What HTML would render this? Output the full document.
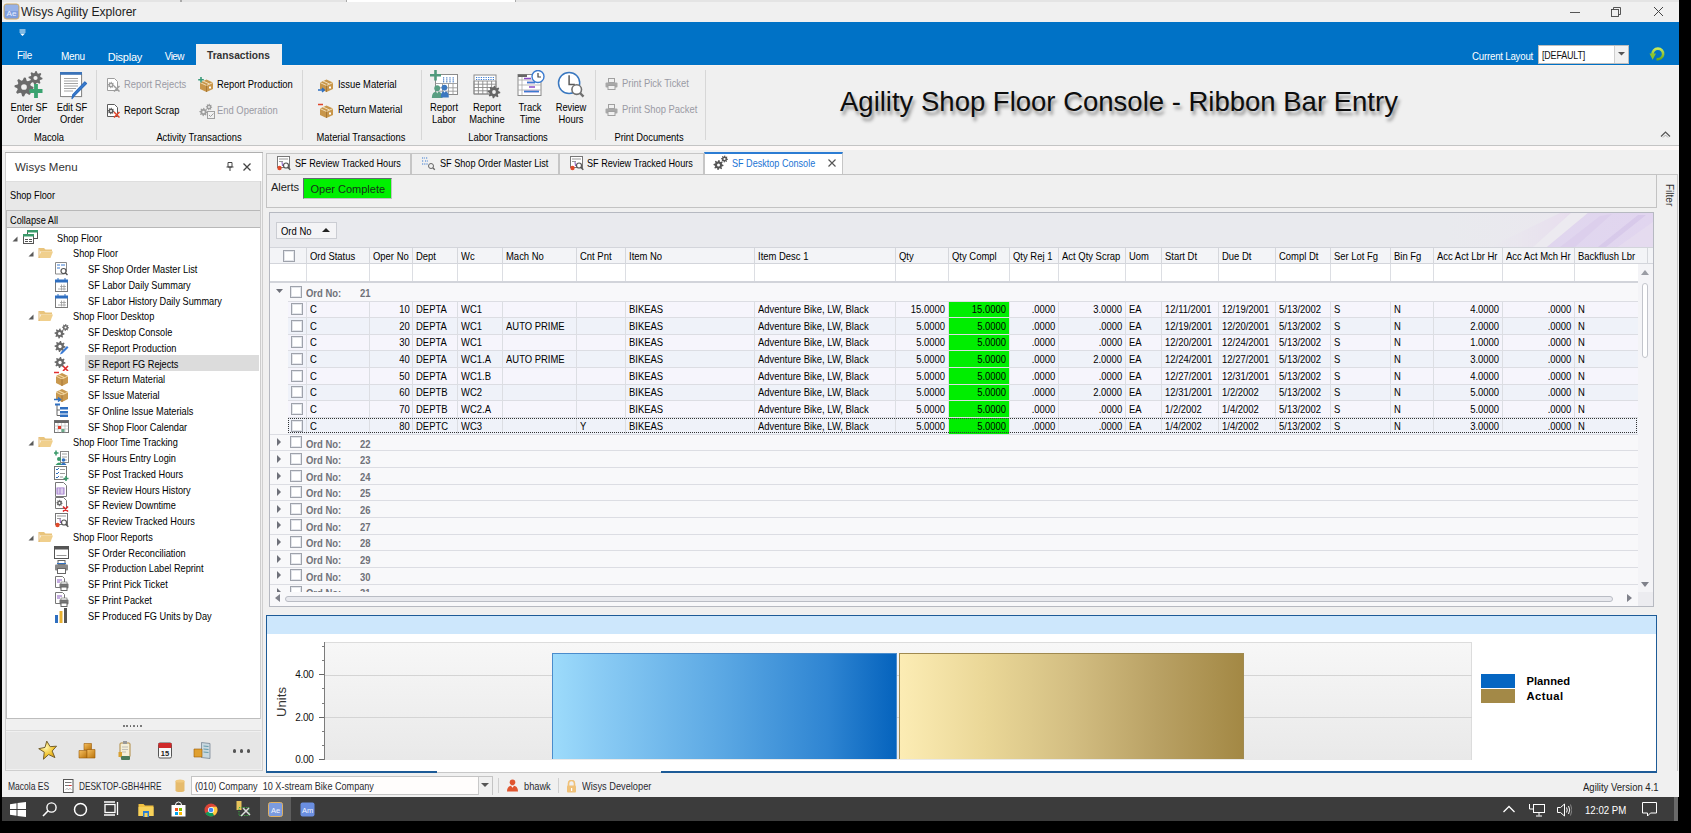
<!DOCTYPE html><html><head><meta charset="utf-8"><style>
*{margin:0;padding:0;box-sizing:border-box}
html,body{width:1691px;height:833px;overflow:hidden;background:#000}
body{position:relative;font-family:"Liberation Sans",sans-serif;color:#1e1e1e}
.a{position:absolute}
.t{font-size:10px;letter-spacing:-0.2px;white-space:nowrap;line-height:12px}

.gt{font-size:10.5px;letter-spacing:0;white-space:nowrap;line-height:12px;color:#000;transform:scaleX(.9);transform-origin:0 0}
.gr{transform-origin:100% 0}
.gb{font-size:10.5px;font-weight:bold;letter-spacing:0;white-space:nowrap;line-height:12px;color:#6f7178;transform:scaleX(.9);transform-origin:0 0}
.cb{position:absolute;width:12px;height:12px;border:1px solid #9ea2ab;background:#fff;box-shadow:inset 0 0 0 1px #e3e5ea}

.tt{font-size:10.4px;letter-spacing:0;white-space:nowrap;line-height:12px;color:#000;transform:scaleX(.885);transform-origin:0 0}

.rt{font-size:10.4px;white-space:nowrap;line-height:12px;color:#000;transform:scaleX(.905);transform-origin:0 0}
.rd{font-size:10.4px;white-space:nowrap;line-height:12px;color:#9a9aa4;transform:scaleX(.905);transform-origin:0 0}
.rc{font-size:10.4px;white-space:nowrap;line-height:12px;color:#000;text-align:center;transform:scaleX(.9);transform-origin:50% 0}

.st{font-size:10.4px;white-space:nowrap;line-height:12px;color:#000;transform:scaleX(.89);transform-origin:0 0}
</style></head><body><div class="a" style="left:0px;top:0px;width:1691px;height:833px;background:#000"></div>
<div class="a" style="left:2px;top:0px;width:1677px;height:797px;background:#f0f0f0"></div>
<div class="a" style="left:2px;top:0px;width:1677px;height:22px;background:#f0f0f0"></div>
<div class="a" style="left:2px;top:0px;width:1677px;height:2px;background:#e4e4e4"></div>
<div class="a" style="left:180px;top:0px;width:1.5px;height:2px;background:#aaa"></div>
<div class="a" style="left:347px;top:0px;width:168px;height:2px;background:#fff"></div>
<div class="a" style="left:346px;top:0px;width:1.2px;height:2px;background:#aaa"></div>
<div class="a" style="left:515px;top:0px;width:1.2px;height:2px;background:#aaa"></div>
<svg class="a" style="left:3px;top:3px" width="17" height="17" viewBox="0 0 17 17"><rect x="1" y="1" width="15" height="15" rx="2.5" fill="#7e9ede" stroke="#d8b066" stroke-width="1"/><rect x="2" y="2" width="13" height="6" fill="#a9c0ec" opacity=".6"/><text x="8.5" y="12.5" font-size="8" text-anchor="middle" font-family="Liberation Sans" fill="#e8eeff">Ae</text></svg>
<div class="a t" style="left:21px;top:4.5px;font-size:12.2px;letter-spacing:-0.05px;line-height:14px;color:#1e1e1e">Wisys Agility Explorer</div>
<div class="a" style="left:1570px;top:12px;width:9.5px;height:1px;background:#555"></div>
<svg class="a" style="left:1611px;top:7px" width="10" height="10" viewBox="0 0 10 10"><rect x="0.5" y="2.5" width="7" height="7" fill="none" stroke="#444" stroke-width=".9"/><path d="M2.5 2.5v-2h7v7h-2" fill="none" stroke="#444" stroke-width=".9"/></svg>
<svg class="a" style="left:1653px;top:6px" width="11" height="11" viewBox="0 0 11 11"><path d="M1 1l9 9M10 1l-9 9" stroke="#444" stroke-width="1"/></svg>
<div class="a" style="left:2px;top:22px;width:1677px;height:43px;background:#0072c6"></div>
<svg class="a" style="left:19px;top:29px" width="7" height="7" viewBox="0 0 7 7"><path d="M0.5 1h6M0.5 3h6" stroke="#fff" stroke-width="1"/><path d="M1 4.5h5l-2.5 2.5z" fill="#fff"/></svg>
<div class="a t" style="left:17px;top:49.80px;color:#fff;font-size:10px;letter-spacing:-0.3px">File</div>
<div class="a t" style="left:61px;top:50.90px;color:#fff;font-size:10px;letter-spacing:-0.3px">Menu</div>
<div class="a t" style="left:107.7px;top:51.20px;color:#fff;font-size:11px;letter-spacing:-0.25px">Display</div>
<div class="a t" style="left:164.8px;top:50.90px;color:#fff;font-size:10px;letter-spacing:-0.6px">View</div>
<div class="a" style="left:196px;top:44px;width:86px;height:21px;background:#f0f0f0"></div>
<div class="a t" style="left:207px;top:49.50px;font-weight:bold;font-size:10.2px;letter-spacing:0;color:#333">Transactions</div>
<div class="a t" style="left:1472px;top:50.60px;color:#fff;font-size:10.4px;transform:scaleX(.926);transform-origin:0 0">Current Layout</div>
<div class="a" style="left:1538px;top:45px;width:91px;height:19px;background:#fff;border:1px solid #bdbdbd"></div>
<div class="a t" style="left:1542px;top:50.10px;font-size:10.4px;color:#111;transform:scaleX(.86);transform-origin:0 0">[DEFAULT]</div>
<div class="a" style="left:1614px;top:46px;width:14px;height:17px;background:#f1f1f1;border-left:1px solid #cfcfcf"></div>
<svg class="a" style="left:1618px;top:52px" width="7" height="4" viewBox="0 0 7 4"><path d="M0 0h7l-3.5 3.5z" fill="#555"/></svg>
<svg class="a" style="left:1648px;top:46px" width="18" height="16" viewBox="0 0 18 16"><defs><linearGradient id="rg" x1="0" y1="0" x2="0" y2="1"><stop offset="0" stop-color="#c8e85a"/><stop offset="1" stop-color="#6aa81a"/></linearGradient></defs><path d="M4.6 8.5 A5.3 5.3 0 1 1 8.5 13" fill="none" stroke="url(#rg)" stroke-width="2.6"/><path d="M1.5 7.5 L8 7.5 L4.6 13.8 Z" fill="#8cc42a"/></svg>
<div class="a" style="left:2px;top:65px;width:1677px;height:80px;background:#f0f0f0"></div>
<div class="a" style="left:2px;top:65px;width:194px;height:1px;background:#fbf3ee"></div>
<div class="a" style="left:282px;top:65px;width:1397px;height:1px;background:#fbf3ee"></div>
<div class="a" style="left:2px;top:145px;width:1677px;height:1px;background:#c4c4c4"></div>
<div class="a" style="left:2px;top:146px;width:1677px;height:6px;background:#f0f0f0"></div>
<div class="a" style="left:2px;top:146px;width:1677px;height:4px;background:#fcf8f7"></div>
<div class="a" style="left:96px;top:70px;width:1px;height:70px;background:#d7d7d7"></div>
<div class="a" style="left:302px;top:70px;width:1px;height:70px;background:#d7d7d7"></div>
<div class="a" style="left:421px;top:70px;width:1px;height:70px;background:#d7d7d7"></div>
<div class="a" style="left:595px;top:70px;width:1px;height:70px;background:#d7d7d7"></div>
<div class="a" style="left:705px;top:70px;width:1px;height:70px;background:#d7d7d7"></div>
<div class="a rc" style="left:-11px;width:120px;top:132.00px">Macola</div>
<div class="a rc" style="left:139px;width:120px;top:132.00px">Activity Transactions</div>
<div class="a rc" style="left:300.5px;width:120px;top:132.00px">Material Transactions</div>
<div class="a rc" style="left:447.5px;width:120px;top:132.00px">Labor Transactions</div>
<div class="a rc" style="left:589.3px;width:120px;top:132.00px">Print Documents</div>
<svg class="a" style="left:13px;top:70px" width="33" height="28" viewBox="0 0 33 28"><polygon points="20.50,17.00 20.32,18.85 17.32,19.62 16.69,20.80 17.72,23.72 16.28,24.90 13.62,23.32 12.33,23.71 11.00,26.50 9.15,26.32 8.38,23.32 7.20,22.69 4.28,23.72 3.10,22.28 4.68,19.62 4.29,18.33 1.50,17.00 1.68,15.15 4.68,14.38 5.31,13.20 4.28,10.28 5.72,9.10 8.38,10.68 9.67,10.29 11.00,7.50 12.85,7.68 13.62,10.68 14.80,11.31 17.72,10.28 18.90,11.72 17.32,14.38 17.71,15.67" fill="#6b6b6b"/><circle cx="11" cy="17" r="2.85" fill="#f0f0f0"/><polygon points="29.50,8.00 29.37,9.37 27.16,9.93 26.69,10.80 27.45,12.95 26.39,13.82 24.43,12.66 23.48,12.94 22.50,15.00 21.13,14.87 20.57,12.66 19.70,12.19 17.55,12.95 16.68,11.89 17.84,9.93 17.56,8.98 15.50,8.00 15.63,6.63 17.84,6.07 18.31,5.20 17.55,3.05 18.61,2.18 20.57,3.34 21.52,3.06 22.50,1.00 23.87,1.13 24.43,3.34 25.30,3.81 27.45,3.05 28.32,4.11 27.16,6.07 27.44,7.02" fill="#6b6b6b"/><circle cx="22.5" cy="8" r="2.10" fill="#f0f0f0"/><path d="M23 14v14M16.5 21h13" stroke="#3aa370" stroke-width="3.8"/></svg>
<div class="a rc" style="left:-11px;width:80px;top:102.40px">Enter SF</div>
<div class="a rc" style="left:-11px;width:80px;top:114.00px">Order</div>
<div class="a rc" style="left:32px;width:80px;top:102.40px">Edit SF</div>
<div class="a rc" style="left:32px;width:80px;top:114.00px">Order</div>
<div class="a rc" style="left:404px;width:80px;top:102.40px">Report</div>
<div class="a rc" style="left:404px;width:80px;top:114.00px">Labor</div>
<div class="a rc" style="left:447px;width:80px;top:102.40px">Report</div>
<div class="a rc" style="left:447px;width:80px;top:114.00px">Machine</div>
<div class="a rc" style="left:490px;width:80px;top:102.40px">Track</div>
<div class="a rc" style="left:490px;width:80px;top:114.00px">Time</div>
<div class="a rc" style="left:530.5px;width:80px;top:102.40px">Review</div>
<div class="a rc" style="left:530.5px;width:80px;top:114.00px">Hours</div>
<svg class="a" style="left:59px;top:71px" width="30" height="29" viewBox="0 0 30 29"><rect x="2.5" y="2.5" width="21" height="24" rx="1" fill="#d8d8d8"/><rect x="1.5" y="1.5" width="21" height="24" fill="#fff" stroke="#8a8a8a"/><rect x="1" y="1" width="22" height="2.8" fill="#3b73b9"/><path d="M5 7.5h14M5 10h14M5 12.5h14M5 15h14M5 17.5h12M5 20h9" stroke="#9a9a9a" stroke-width=".9"/><path d="M27.5 12.5 L15.5 24.5 L13 27.5 L13.8 23.6 L25.8 11 Z" fill="#3f7fd0" stroke="#2f6fc0" stroke-width="1.2" stroke-linejoin="round"/></svg>
<svg class="a" style="left:106px;top:78px" width="14" height="14" viewBox="0 0 14 14"><path d="M1.5 0.5h7l3 3v9h-10z" fill="#fff" stroke="#9d9d9d"/><polygon points="8.30,7.00 8.24,7.64 7.20,7.91 6.98,8.32 7.33,9.33 6.83,9.74 5.91,9.20 5.46,9.33 5.00,10.30 4.36,10.24 4.09,9.20 3.68,8.98 2.67,9.33 2.26,8.83 2.80,7.91 2.67,7.46 1.70,7.00 1.76,6.36 2.80,6.09 3.02,5.68 2.67,4.67 3.17,4.26 4.09,4.80 4.54,4.67 5.00,3.70 5.64,3.76 5.91,4.80 6.32,5.02 7.33,4.67 7.74,5.17 7.20,6.09 7.33,6.54" fill="#9d9d9d"/><circle cx="5" cy="7" r="0.99" fill="#fff"/><path d="M8 8l5.5 5.5M13.5 8l-5.5 5.5" stroke="#9d9d9d" stroke-width="1.5"/></svg>
<div class="a rd" style="left:123.8px;top:78.60px;">Report Rejects</div>
<svg class="a" style="left:106px;top:104px" width="14" height="14" viewBox="0 0 14 14"><path d="M1.5 0.5h7l3 3v9h-10z" fill="#fff" stroke="#5b5b5b"/><polygon points="8.30,7.00 8.24,7.64 7.20,7.91 6.98,8.32 7.33,9.33 6.83,9.74 5.91,9.20 5.46,9.33 5.00,10.30 4.36,10.24 4.09,9.20 3.68,8.98 2.67,9.33 2.26,8.83 2.80,7.91 2.67,7.46 1.70,7.00 1.76,6.36 2.80,6.09 3.02,5.68 2.67,4.67 3.17,4.26 4.09,4.80 4.54,4.67 5.00,3.70 5.64,3.76 5.91,4.80 6.32,5.02 7.33,4.67 7.74,5.17 7.20,6.09 7.33,6.54" fill="#5b5b5b"/><circle cx="5" cy="7" r="0.99" fill="#fff"/><path d="M8 8l5.5 5.5M13.5 8l-5.5 5.5" stroke="#e0452a" stroke-width="1.5"/></svg>
<div class="a rt" style="left:123.8px;top:104.60px;">Report Scrap</div>
<svg class="a" style="left:198px;top:77px" width="17" height="16" viewBox="0 0 17 16"><path d="M2 5.5 l6.5-3 6.5 3 v6.5 l-6.5 3 -6.5-3z" fill="#c8964a"/><path d="M2 5.5 l6.5 3 6.5-3" fill="none" stroke="#f3e2bf" stroke-width=".9"/><path d="M8.5 8.5v6.5" stroke="#9e6e30" stroke-width=".8"/><path d="M5 4 l6.5 3" stroke="#f3e2bf" stroke-width="1"/><rect x="11" y="9.5" width="2" height="2" fill="#fff"/><path d="M3 0v5.5M0.2 2.7h5.6" stroke="#3a9a7a" stroke-width="1.6"/></svg>
<div class="a rt" style="left:216.5px;top:78.60px;">Report Production</div>
<svg class="a" style="left:199px;top:103px" width="16" height="16" viewBox="0 0 16 16"><polygon points="8.70,9.00 8.62,9.82 7.29,10.16 7.01,10.68 7.47,11.97 6.83,12.49 5.66,11.79 5.09,11.97 4.50,13.20 3.68,13.12 3.34,11.79 2.82,11.51 1.53,11.97 1.01,11.33 1.71,10.16 1.53,9.59 0.30,9.00 0.38,8.18 1.71,7.84 1.99,7.32 1.53,6.03 2.17,5.51 3.34,6.21 3.91,6.03 4.50,4.80 5.32,4.88 5.66,6.21 6.18,6.49 7.47,6.03 7.99,6.67 7.29,7.84 7.47,8.41" fill="#9d9d9d"/><circle cx="4.5" cy="9" r="1.26" fill="#f0f0f0"/><polygon points="13.20,4.00 13.14,4.62 12.13,4.88 11.92,5.28 12.26,6.26 11.78,6.66 10.88,6.13 10.45,6.26 10.00,7.20 9.38,7.14 9.12,6.13 8.72,5.92 7.74,6.26 7.34,5.78 7.87,4.88 7.74,4.45 6.80,4.00 6.86,3.38 7.87,3.12 8.08,2.72 7.74,1.74 8.22,1.34 9.12,1.87 9.55,1.74 10.00,0.80 10.62,0.86 10.88,1.87 11.28,2.08 12.26,1.74 12.66,2.22 12.13,3.12 12.26,3.55" fill="#9d9d9d"/><circle cx="10" cy="4" r="0.96" fill="#f0f0f0"/><rect x="8.5" y="8.5" width="7" height="7" fill="#f0f0f0" stroke="#a0a0a0"/><path d="M10 12l1.5 1.5 3-3" stroke="#a0a0a0" fill="none"/></svg>
<div class="a rd" style="left:216.5px;top:104.60px;">End Operation</div>
<svg class="a" style="left:318px;top:77px" width="17" height="16" viewBox="0 0 17 16"><path d="M2 5.5 l6.5-3 6.5 3 v6.5 l-6.5 3 -6.5-3z" fill="#c8964a"/><path d="M2 5.5 l6.5 3 6.5-3" fill="none" stroke="#f3e2bf" stroke-width=".9"/><path d="M8.5 8.5v6.5" stroke="#9e6e30" stroke-width=".8"/><path d="M5 4 l6.5 3" stroke="#f3e2bf" stroke-width="1"/><rect x="11" y="9.5" width="2" height="2" fill="#fff"/><path d="M0 13h6M4 11l2.3 2-2.3 2" stroke="#2f6fc0" stroke-width="1.5" fill="none"/></svg>
<div class="a rt" style="left:338.2px;top:78.60px;">Issue Material</div>
<svg class="a" style="left:318px;top:103px" width="17" height="16" viewBox="0 0 17 16"><path d="M2 5.5 l6.5-3 6.5 3 v6.5 l-6.5 3 -6.5-3z" fill="#c8964a"/><path d="M2 5.5 l6.5 3 6.5-3" fill="none" stroke="#f3e2bf" stroke-width=".9"/><path d="M8.5 8.5v6.5" stroke="#9e6e30" stroke-width=".8"/><path d="M5 4 l6.5 3" stroke="#f3e2bf" stroke-width="1"/><rect x="11" y="9.5" width="2" height="2" fill="#fff"/><path d="M0 1.5h5" stroke="#e0452a" stroke-width="1.5"/></svg>
<div class="a rt" style="left:338.2px;top:104.40px;">Return Material</div>
<svg class="a" style="left:429px;top:70px" width="30" height="28" viewBox="0 0 30 28"><rect x="6.5" y="4.5" width="22" height="20" fill="#fff" stroke="#8a8a8a"/><path d="M6.5 13.5h22M6.5 17.8h22M6.5 21.2h22M13.5 13.5v11M19.5 13.5v11M24 13.5v11" stroke="#9a9a9a" stroke-width=".9"/><rect x="14.0" y="7.3" width="1.2" height="1.2" fill="#3b73c0"/><rect x="14.0" y="9.3" width="1.2" height="1.2" fill="#3b73c0"/><rect x="14.0" y="11.2" width="1.2" height="1.2" fill="#3b73c0"/><rect x="17.2" y="7.3" width="1.2" height="1.2" fill="#3b73c0"/><rect x="17.2" y="9.3" width="1.2" height="1.2" fill="#3b73c0"/><rect x="17.2" y="11.2" width="1.2" height="1.2" fill="#3b73c0"/><rect x="20.4" y="7.3" width="1.2" height="1.2" fill="#3b73c0"/><rect x="20.4" y="9.3" width="1.2" height="1.2" fill="#3b73c0"/><rect x="20.4" y="11.2" width="1.2" height="1.2" fill="#3b73c0"/><rect x="23.6" y="7.3" width="1.2" height="1.2" fill="#3b73c0"/><rect x="23.6" y="9.3" width="1.2" height="1.2" fill="#3b73c0"/><rect x="23.6" y="11.2" width="1.2" height="1.2" fill="#3b73c0"/><path d="M1 5.3h11M6.5 0v10.5" stroke="#4f9a7c" stroke-width="2.6"/><circle cx="8.2" cy="18.2" r="2.9" fill="#5a9e82"/><path d="M2.8 28 Q2.8 21.6 8.2 21.6 Q13.6 21.6 13.6 28 Z" fill="#5a9e82"/><path d="M7.2 21.6h2l-1 1.8z" fill="#fff"/><circle cx="15.4" cy="17.6" r="2.9" fill="#3c78c0"/><path d="M11.8 27.5 Q11.8 21 15.6 21 Q19.8 21 19.8 27.5 Z" fill="#3c78c0"/><path d="M14.6 21h2l-1 1.8z" fill="#fff"/></svg>
<svg class="a" style="left:473px;top:74px" width="29" height="25" viewBox="0 0 29 25"><rect x="1" y="1" width="22" height="19" fill="#fff"/><path d="M1 7.0h22" stroke="#8a8a8a" stroke-width=".9"/><path d="M1 10.2h22" stroke="#8a8a8a" stroke-width=".9"/><path d="M1 13.5h22" stroke="#8a8a8a" stroke-width=".9"/><path d="M1 16.8h22" stroke="#8a8a8a" stroke-width=".9"/><path d="M1 20.0h22" stroke="#8a8a8a" stroke-width=".9"/><path d="M1.0 7v13" stroke="#8a8a8a" stroke-width=".9"/><path d="M5.4 7v13" stroke="#8a8a8a" stroke-width=".9"/><path d="M9.8 7v13" stroke="#8a8a8a" stroke-width=".9"/><path d="M14.2 7v13" stroke="#8a8a8a" stroke-width=".9"/><path d="M18.6 7v13" stroke="#8a8a8a" stroke-width=".9"/><path d="M23.0 7v13" stroke="#8a8a8a" stroke-width=".9"/><rect x="1" y="1" width="22" height="19" fill="none" stroke="#8a8a8a"/><path d="M3 3.5h18M3 5.5h18" stroke="#3b7bd0" stroke-dasharray="1.2 1.2"/><polygon points="27.30,18.00 27.18,19.23 25.19,19.74 24.77,20.52 25.45,22.45 24.50,23.24 22.74,22.19 21.88,22.45 21.00,24.30 19.77,24.18 19.26,22.19 18.48,21.77 16.55,22.45 15.76,21.50 16.81,19.74 16.55,18.88 14.70,18.00 14.82,16.77 16.81,16.26 17.23,15.48 16.55,13.55 17.50,12.76 19.26,13.81 20.12,13.55 21.00,11.70 22.23,11.82 22.74,13.81 23.52,14.23 25.45,13.55 26.24,14.50 25.19,16.26 25.45,17.12" fill="#666"/><circle cx="21" cy="18" r="1.89" fill="#f0f0f0"/></svg>
<svg class="a" style="left:517px;top:70px" width="28" height="27" viewBox="0 0 28 27"><rect x="1" y="4.5" width="23" height="21" fill="#fff" stroke="#8a8a8a"/><rect x="1" y="4.5" width="9" height="2.5" fill="#666"/><path d="M1 10h23M1 15h23M1 20h23M5 7v18" stroke="#aaa" stroke-width=".8"/><path d="M7 8.5h7M10 12.5h8M12 17h6M7 21.5h15" stroke="#8a4ac8" stroke-width="1.4"/><path d="M10 12.5h8M7 21.5h15" stroke="#3b7bd0" stroke-width="1.4"/><circle cx="21" cy="6.5" r="6" fill="#fff" stroke="#3b7bd0" stroke-width="1.4"/><path d="M21 3v4h3" stroke="#444" fill="none" stroke-width="1.2"/></svg>
<svg class="a" style="left:557px;top:71px" width="28" height="28" viewBox="0 0 28 28"><circle cx="12.1" cy="12" r="10.6" fill="#fff" stroke="#3a78c0" stroke-width="1.5"/><path d="M12.1 4.2v9.2h5.8" stroke="#5a5a5a" fill="none" stroke-width="1.5"/><circle cx="19.7" cy="18.6" r="4.8" fill="#fff" stroke="#707070" stroke-width="1.6"/><path d="M23 22l3.5 3.6" stroke="#707070" stroke-width="2.4"/></svg>
<svg class="a" style="left:605px;top:78px" width="13" height="12" viewBox="0 0 13 12"><rect x="3.5" y="0.5" width="6" height="4" fill="#f0f0f0" stroke="#a0a0a0"/><rect x="0.5" y="4.5" width="12" height="5" rx="1" fill="#a8a8a8"/><rect x="3" y="7.5" width="7" height="4" fill="#f0f0f0" stroke="#a0a0a0"/></svg>
<div class="a rd" style="left:622.4px;top:78.40px;">Print Pick Ticket</div>
<svg class="a" style="left:605px;top:104px" width="13" height="12" viewBox="0 0 13 12"><rect x="3.5" y="0.5" width="6" height="4" fill="#f0f0f0" stroke="#a0a0a0"/><rect x="0.5" y="4.5" width="12" height="5" rx="1" fill="#a8a8a8"/><rect x="3" y="7.5" width="7" height="4" fill="#f0f0f0" stroke="#a0a0a0"/></svg>
<div class="a rd" style="left:622.4px;top:104.40px;">Print Shop Packet</div>
<div class="a t" style="left:840px;top:86px;font-size:27.5px;letter-spacing:0;line-height:32px;color:#0d0d0d;text-shadow:2px 4px 3.5px rgba(0,0,0,.42)">Agility Shop Floor Console - Ribbon Bar Entry</div>
<svg class="a" style="left:1660px;top:130px" width="11" height="8" viewBox="0 0 11 8"><path d="M1 6.5 L5.5 2 L10 6.5" fill="none" stroke="#555" stroke-width="1.2"/><path d="M3 7.5 L5.5 5 L8 7.5" fill="none" stroke="#999" stroke-width=".8"/></svg>
<div class="a" style="left:263px;top:152px;width:1416px;height:619px;background:#f0f0f0"></div>
<div class="a" style="left:266px;top:152.5px;width:145px;height:21.5px;background:#f0f0f0;border:1px solid #c6c6c6;border-bottom:none"></div>
<svg class="a" style="left:276px;top:156px" width="15" height="15" viewBox="0 0 15 15"><rect x="1.5" y="0.5" width="12" height="11" fill="#fff" stroke="#777"/><path d="M3 3h9M3 5.5h4" stroke="#999"/><circle cx="3.5" cy="12" r="2.2" fill="#e04a2a"/><path d="M6 6l0.5 4" stroke="#8a5ac0"/><circle cx="10" cy="9.5" r="2.5" fill="#fff" stroke="#555" stroke-width="1.2"/><path d="M11.8 11.3l2.5 2.5" stroke="#555" stroke-width="1.5"/></svg>
<div class="a st" style="left:294.6px;top:158.00px;transform:scaleX(.877)">SF Review Tracked Hours</div>
<div class="a" style="left:411px;top:152.5px;width:147.5px;height:21.5px;background:#f0f0f0;border:1px solid #c6c6c6;border-bottom:none"></div>
<svg class="a" style="left:421px;top:156px" width="15" height="15" viewBox="0 0 15 15"><path d="M1 2h3M5 2h2M1 5h2M4 5h3M1 8h6" stroke="#3b7bd0" stroke-width="1" stroke-dasharray="1 .8"/><circle cx="10" cy="10" r="2.5" fill="none" stroke="#666"/><path d="M11.8 11.8l2 2" stroke="#666" stroke-width="1.3"/></svg>
<div class="a st" style="left:439.5px;top:158.00px;transform:scaleX(.877)">SF Shop Order Master List</div>
<div class="a" style="left:558.5px;top:152.5px;width:145.0px;height:21.5px;background:#f0f0f0;border:1px solid #c6c6c6;border-bottom:none"></div>
<svg class="a" style="left:568.5px;top:156px" width="15" height="15" viewBox="0 0 15 15"><rect x="1.5" y="0.5" width="12" height="11" fill="#fff" stroke="#777"/><path d="M3 3h9M3 5.5h4" stroke="#999"/><circle cx="3.5" cy="12" r="2.2" fill="#e04a2a"/><path d="M6 6l0.5 4" stroke="#8a5ac0"/><circle cx="10" cy="9.5" r="2.5" fill="#fff" stroke="#555" stroke-width="1.2"/><path d="M11.8 11.3l2.5 2.5" stroke="#555" stroke-width="1.5"/></svg>
<div class="a st" style="left:587.3px;top:158.00px;transform:scaleX(.877)">SF Review Tracked Hours</div>
<div class="a" style="left:703.5px;top:152px;width:139px;height:22.5px;background:#fff;border:1px solid #c6c6c6;border-bottom:none;border-top:2px solid #2b7cd3"></div>
<svg class="a" style="left:713px;top:155px" width="16" height="16" viewBox="0 0 16 16"><polygon points="10.50,10.00 10.40,10.98 8.83,11.38 8.49,12.00 9.04,13.54 8.28,14.16 6.88,13.33 6.20,13.53 5.50,15.00 4.52,14.90 4.12,13.33 3.50,12.99 1.96,13.54 1.34,12.78 2.17,11.38 1.97,10.70 0.50,10.00 0.60,9.02 2.17,8.62 2.51,8.00 1.96,6.46 2.72,5.84 4.12,6.67 4.80,6.47 5.50,5.00 6.48,5.10 6.88,6.67 7.50,7.01 9.04,6.46 9.66,7.22 8.83,8.62 9.03,9.30" fill="#555"/><circle cx="5.5" cy="10" r="1.50" fill="#fff"/><polygon points="15.00,4.00 14.93,4.68 13.83,4.96 13.60,5.40 13.97,6.47 13.44,6.91 12.46,6.33 11.99,6.47 11.50,7.50 10.82,7.43 10.54,6.33 10.10,6.10 9.03,6.47 8.59,5.94 9.17,4.96 9.03,4.49 8.00,4.00 8.07,3.32 9.17,3.04 9.40,2.60 9.03,1.53 9.56,1.09 10.54,1.67 11.01,1.53 11.50,0.50 12.18,0.57 12.46,1.67 12.90,1.90 13.97,1.53 14.41,2.06 13.83,3.04 13.97,3.51" fill="#555"/><circle cx="11.5" cy="4" r="1.05" fill="#fff"/></svg>
<div class="a st" style="left:732px;top:158.00px;color:#1a73d4;transform:scaleX(.873)">SF Desktop Console</div>
<svg class="a" style="left:827.5px;top:159px" width="8" height="8" viewBox="0 0 8 8"><path d="M0.5 0.5l7 7M7.5 0.5l-7 7" stroke="#555" stroke-width="1.15"/></svg>
<div class="a" style="left:266px;top:173.5px;width:1391px;height:34px;background:#f0f0f0;border:1px solid #c3c3c3"></div>
<div class="a st" style="left:271px;top:181.00px;font-size:11.2px;letter-spacing:-0.1px;color:#222;transform:none">Alerts</div>
<div class="a" style="left:303px;top:178px;width:89px;height:21px;background:#00f000;border:1px solid #5f6a70;border-right-color:#c0c0c0;border-bottom-color:#c0c0c0"></div>
<div class="a st" style="left:310.5px;top:183.00px;font-size:11px;letter-spacing:0;color:#17301c;transform:none">Oper Complete</div>
<div class="a" style="left:1656.5px;top:173.5px;width:21px;height:597px;background:#f0f0f0;border-right:1px solid #c6c6c6"></div>
<div class="a" style="left:1656.5px;top:173.5px;width:21px;height:1px;background:#c6c6c6"></div>
<div class="a st" style="left:1658px;top:189px;transform:rotate(90deg);transform-origin:center;width:22px;text-align:center;font-size:10px;color:#333">Filter</div>
<div class="a" style="left:266px;top:615px;width:1391px;height:157px;background:#fff;border:1px solid #1d5b97"></div>
<div class="a" style="left:267px;top:616px;width:1389px;height:18px;background:#cde7fc"></div>
<div class="a" style="left:437px;top:770.5px;width:224px;height:1.5px;background:#fff"></div>
<div class="a" style="left:324px;top:642px;width:1148px;height:117.5px;background:linear-gradient(180deg,#f7f7f7,#e9e9e9);border:1px solid #dcdcdc;border-left:none;border-bottom:none"></div>
<div class="a" style="left:324.5px;top:674.5px;width:1147px;height:1px;background:#d4d4d4"></div>
<div class="a" style="left:324.5px;top:717px;width:1147px;height:1px;background:#d4d4d4"></div>
<div class="a" style="left:323.5px;top:642px;width:1.5px;height:118px;background:#7c7c7c"></div>
<div class="a" style="left:321.5px;top:646.0px;width:2.5px;height:1px;background:#7c7c7c"></div>
<div class="a" style="left:321.5px;top:660.0px;width:2.5px;height:1px;background:#7c7c7c"></div>
<div class="a" style="left:321.5px;top:688.0px;width:2.5px;height:1px;background:#7c7c7c"></div>
<div class="a" style="left:321.5px;top:702.7px;width:2.5px;height:1px;background:#7c7c7c"></div>
<div class="a" style="left:321.5px;top:731.0px;width:2.5px;height:1px;background:#7c7c7c"></div>
<div class="a" style="left:321.5px;top:745.0px;width:2.5px;height:1px;background:#7c7c7c"></div>
<div class="a" style="left:319px;top:673.9px;width:5px;height:1.2px;background:#666"></div>
<div class="a" style="left:319px;top:716.6px;width:5px;height:1.2px;background:#666"></div>
<div class="a" style="left:319px;top:758.6px;width:5px;height:1.2px;background:#666"></div>
<div class="a st" style="left:295.3px;top:669.1px;font-size:10px;letter-spacing:-0.35px;color:#111;transform:none">4.00</div>
<div class="a st" style="left:295.3px;top:711.8px;font-size:10px;letter-spacing:-0.35px;color:#111;transform:none">2.00</div>
<div class="a st" style="left:295.3px;top:753.8px;font-size:10px;letter-spacing:-0.35px;color:#111;transform:none">0.00</div>
<div class="a" style="left:262px;top:694.5px;width:40px;height:14px;transform:rotate(-90deg);text-align:center;font-size:13.2px;line-height:14px;color:#333;font-family:'Liberation Sans'">Units</div>
<div class="a" style="left:552px;top:653px;width:345px;height:106px;background:linear-gradient(90deg,#9ddbfb 0%,#8ccdf5 12%,#5aa7e3 50%,#2f85d2 80%,#0563bd 100%);border:1px solid #4a8ccc;border-bottom:none"></div>
<div class="a" style="left:898.5px;top:653px;width:345px;height:106px;background:linear-gradient(90deg,#fcecb4 0%,#ead797 25%,#d3be82 50%,#b9a164 75%,#a38844 100%);border:1px solid #a08a50;border-bottom:none"></div>
<div class="a" style="left:1481px;top:674px;width:33.5px;height:14px;background:#0566c2"></div>
<div class="a" style="left:1481px;top:689.2px;width:33.5px;height:13.5px;background:#a38947"></div>
<div class="a st" style="left:1526.5px;top:674.70px;font-weight:bold;font-size:11.2px;letter-spacing:0;color:#000;transform:none">Planned</div>
<div class="a st" style="left:1526.5px;top:690.10px;font-weight:bold;font-size:11.2px;letter-spacing:0.5px;color:#000;transform:none">Actual</div>
<div class="a" style="left:2px;top:771.5px;width:1676px;height:25px;background:#f0f0f0"></div>
<div class="a" style="left:266px;top:771.5px;width:1391px;height:0.8px;background:#1d5b97"></div>
<div class="a" style="left:437px;top:771.5px;width:224px;height:0.8px;background:#c8c8c8"></div>
<div class="a st" style="left:7.7px;top:780.70px;transform:scaleX(.82);color:#2a2a30">Macola ES</div>
<svg class="a" style="left:63px;top:779px" width="11" height="14" viewBox="0 0 11 14"><rect x="0.5" y="0.5" width="9.5" height="13" fill="#fff" stroke="#555"/><path d="M2 3.5h6.5M2 6.5h6.5" stroke="#777"/><rect x="6" y="6" width="2.5" height="1" fill="#e03030"/><path d="M2.5 10.5l1.5 -1 1.5 1 1.5 -1 1.5 1" stroke="#777" fill="none" stroke-width=".6"/></svg>
<div class="a st" style="left:78.7px;top:780.70px;transform:scaleX(.8);color:#2a2a30">DESKTOP-GBH4HRE</div>
<svg class="a" style="left:175px;top:779px" width="10" height="13" viewBox="0 0 10 13"><path d="M0.5 2 v9.5 a4.5 1.6 0 0 0 9 0 v-9.5 z" fill="#e6bb6c"/><ellipse cx="5" cy="2" rx="4.5" ry="1.6" fill="#f0c97e"/></svg>
<div class="a" style="left:191px;top:776.2px;width:301.5px;height:19px;background:#fffdfc;border:1px solid #c4c4c4"></div>
<div class="a" style="left:477.5px;top:777px;width:14px;height:17.5px;background:#f0f0f0;border-left:1px solid #c9c9c9"></div>
<svg class="a" style="left:481px;top:783px" width="8" height="5" viewBox="0 0 8 5"><path d="M0 0h8l-4 4z" fill="#555"/></svg>
<div class="a st" style="left:195px;top:780.70px;transform:scaleX(.875);color:#2a2a30">(010) Company&nbsp; 10 X-stream Bike Company</div>
<div class="a" style="left:498px;top:778px;width:1px;height:15px;background:#d0d0d0"></div>
<svg class="a" style="left:506px;top:779px" width="13" height="13" viewBox="0 0 13 13"><circle cx="6.5" cy="3.3" r="2.8" fill="#e0552f"/><path d="M1 12.5 q0-6 5.5-6 q5.5 0 5.5 6z" fill="#e0552f"/><path d="M5 6.8l1.5 2 1.5-2" fill="#fff"/></svg>
<div class="a st" style="left:523.9px;top:780.50px;color:#2a2a30">bhawk</div>
<div class="a" style="left:557.5px;top:778px;width:1px;height:15px;background:#d0d0d0"></div>
<svg class="a" style="left:566px;top:780px" width="11" height="13" viewBox="0 0 11 13"><path d="M2.5 6v-2.5a3 3 0 0 1 6 0v2.5" fill="none" stroke="#f0c178" stroke-width="1.6"/><rect x="1" y="5.5" width="9" height="7" rx="1" fill="#f0c178"/><rect x="5" y="8" width="1.2" height="3" fill="#fff"/></svg>
<div class="a st" style="left:582px;top:780.70px;color:#2a2a30">Wisys Developer</div>
<div class="a st" style="left:1582.8px;top:781.50px;color:#222;transform:scaleX(.915)">Agility Version 4.1</div>
<div class="a" style="left:0px;top:796.5px;width:1676px;height:24px;background:#3c3c3c"></div>
<div class="a" style="left:1674px;top:796.5px;width:4px;height:24px;background:#6a6a6a"></div>
<div class="a" style="left:0px;top:820.5px;width:1691px;height:12.5px;background:#000"></div>
<div class="a" style="left:0px;top:0px;width:2px;height:833px;background:#000"></div>
<div class="a" style="left:1679px;top:0px;width:12px;height:833px;background:#000"></div>
<svg class="a" style="left:10px;top:802px" width="16" height="15" viewBox="0 0 16 15"><path d="M0 2.2 L6.5 1.2 V7 H0 Z M7.5 1 L16 0 V7 H7.5 Z M0 8 H6.5 V13.8 L0 12.8 Z M7.5 8 H16 V15 L7.5 14 Z" fill="#fff"/></svg>
<svg class="a" style="left:42px;top:802px" width="15" height="16" viewBox="0 0 15 16"><circle cx="9.5" cy="5.5" r="4.6" fill="none" stroke="#fff" stroke-width="1.4"/><path d="M6.2 8.8 L1 14" stroke="#fff" stroke-width="1.6"/></svg>
<svg class="a" style="left:73px;top:802px" width="15" height="15" viewBox="0 0 15 15"><circle cx="7.5" cy="7.5" r="6" fill="none" stroke="#fff" stroke-width="1.5"/></svg>
<svg class="a" style="left:104px;top:801px" width="15" height="16" viewBox="0 0 15 16"><rect x="1" y="3.5" width="10" height="8" fill="none" stroke="#fff" stroke-width="1.3"/><path d="M0 1h11M0 14h11M13.5 1v13" stroke="#fff" stroke-width="1.3"/></svg>
<svg class="a" style="left:138px;top:802px" width="16" height="15" viewBox="0 0 16 15"><path d="M0.5 2h5l1.5 1.5h8.5v10.5h-15z" fill="#f0c040"/><path d="M0.5 5h15v9h-15z" fill="#f7d25a"/><rect x="5" y="9" width="6" height="6" fill="#2a7fd4"/><rect x="6.5" y="11" width="3" height="4" fill="#f7d25a"/></svg>
<svg class="a" style="left:171px;top:801px" width="15" height="16" viewBox="0 0 15 16"><path d="M4.5 4 a3 3 0 0 1 6 0" fill="none" stroke="#fff"/><rect x="0.5" y="4" width="14" height="11.5" fill="#fff"/><rect x="4" y="7" width="3" height="3" fill="#f25022"/><rect x="8" y="7" width="3" height="3" fill="#7fba00"/><rect x="4" y="11" width="3" height="3" fill="#00a4ef"/><rect x="8" y="11" width="3" height="3" fill="#ffb900"/></svg>
<svg class="a" style="left:204px;top:803px" width="14" height="14" viewBox="0 0 14 14"><circle cx="7" cy="7" r="6.5" fill="#db4437"/><path d="M7 7 L1.4 10.2 A6.5 6.5 0 0 0 10.2 12.6 Z" fill="#0f9d58"/><path d="M7 7 L10.2 12.6 A6.5 6.5 0 0 0 12.6 3.8 L7 3.8Z" fill="#ffcd40"/><circle cx="7" cy="7" r="3" fill="#fff"/><circle cx="7" cy="7" r="2.3" fill="#4285f4"/></svg>
<svg class="a" style="left:236px;top:801px" width="15" height="16" viewBox="0 0 15 16"><rect x="0.5" y="0" width="5" height="9" fill="#e7c35a"/><path d="M3 6.5h10v8h-10z" fill="none" stroke="#3bb143" stroke-dasharray="1.2 1.2"/><path d="M5 15l8-8M7 7l7 7" stroke="#ddd" stroke-width="1.5"/></svg>
<div class="a" style="left:260px;top:796.5px;width:31px;height:24px;background:#5e5e5e"></div>
<svg class="a" style="left:268px;top:802px" width="15" height="15" viewBox="0 0 15 15"><rect x="0.5" y="0.5" width="14" height="14" rx="2" fill="#7b9be0" stroke="#e0b060"/><text x="7.5" y="10.5" font-size="7.5" text-anchor="middle" font-family="Liberation Sans" fill="#f0f4ff">Ae</text></svg>
<svg class="a" style="left:300px;top:802px" width="15" height="15" viewBox="0 0 15 15"><rect x="0.5" y="0.5" width="14" height="14" rx="2" fill="#6a8ee0"/><text x="7.5" y="10.5" font-size="7.5" text-anchor="middle" font-family="Liberation Sans" fill="#f0f4ff">Am</text></svg>
<svg class="a" style="left:1503px;top:805px" width="12" height="8" viewBox="0 0 12 8"><path d="M0.5 7 L6 1.5 L11.5 7" fill="none" stroke="#fff" stroke-width="1.3"/></svg>
<svg class="a" style="left:1529px;top:803px" width="16" height="14" viewBox="0 0 16 14"><rect x="4.5" y="1.5" width="11" height="8" fill="none" stroke="#fff"/><path d="M10 9.5v3M7 13h6M0.5 1v5h4" stroke="#fff" fill="none"/></svg>
<svg class="a" style="left:1557px;top:803px" width="15" height="14" viewBox="0 0 15 14"><path d="M0.5 4.5h3l4-3.5v12l-4-3.5h-3z" fill="none" stroke="#fff"/><path d="M9.5 4.5 q1.5 2.5 0 5M11.5 3 q2.5 4 0 8" fill="none" stroke="#fff"/><path d="M13.5 1.5q3 5.5 0 11" fill="none" stroke="#888"/></svg>
<div class="a st" style="left:1584.7px;top:804.80px;color:#fff;transform:scaleX(.93)">12:02 PM</div>
<svg class="a" style="left:1642px;top:802px" width="15" height="15" viewBox="0 0 15 15"><path d="M0.5 0.5h14v10.5h-6l-3 3v-3h-5z" fill="none" stroke="#fff"/></svg>
<div class="a" style="left:5px;top:152px;width:258px;height:619px;background:#f0f0f0;border:1px solid #cfcfcf"></div>
<div class="a" style="left:6px;top:153px;width:256px;height:28px;background:#fff"></div>
<div class="a" style="left:5px;top:152px;width:258px;height:1.2px;background:#b0b0b0"></div>
<div class="a t" style="left:15px;top:160px;font-size:11.5px;letter-spacing:0;line-height:14px;color:#333">Wisys Menu</div>
<svg class="a" style="left:226px;top:162px" width="8" height="9" viewBox="0 0 8 9"><path d="M2 0.5h4v4.5h-4z" fill="none" stroke="#444"/><path d="M0.5 5h7M4 5v4" stroke="#444"/></svg>
<svg class="a" style="left:243px;top:163px" width="8" height="8" viewBox="0 0 8 8"><path d="M0.5 0.5l7 7M7.5 0.5l-7 7" stroke="#444" stroke-width="1.3"/></svg>
<div class="a" style="left:6px;top:181px;width:255px;height:30px;background:#e8e8e8;border-top:1px solid #dedede"></div>
<div class="a tt" style="left:10px;top:190px;">Shop Floor</div>
<div class="a" style="left:6px;top:210px;width:255px;height:18px;background:#e4e4e4;border:1px solid #b8b8b8"></div>
<div class="a tt" style="left:10px;top:214.5px;">Collapse All</div>
<div class="a" style="left:6px;top:228px;width:255px;height:491px;background:#fff;border:1px solid #bdbdbd;border-top:none"></div>
<div class="a" style="left:260px;top:181px;width:1px;height:538px;background:#cdcdcd"></div>
<div class="a" style="left:85px;top:355.3px;width:174px;height:15.5px;background:#dcdcdc"></div>
<svg class="a" style="left:12.0px;top:235.50px" width="6" height="6" viewBox="0 0 6 6"><path d="M5.5 0.5 L5.5 5.5 L0.5 5.5 Z" fill="#5a5a5a"/></svg>
<svg class="a" style="left:23px;top:229.50px" width="15" height="15" viewBox="0 0 15 15"><rect x="4.5" y="0.5" width="10" height="8" fill="#fff" stroke="#555"/><rect x="4" y="0" width="11" height="2.5" fill="#3a9a6a"/><rect x="0.5" y="4.5" width="10" height="9" fill="#fff" stroke="#555"/><rect x="0" y="4" width="11" height="2.5" fill="#3a9a6a"/><path d="M2 9.5h3M6 9.5h3M2 11.5h3M6 11.5h3" stroke="#555" stroke-width="1"/></svg>
<div class="a tt" style="left:56.5px;top:232.50px;">Shop Floor</div>
<svg class="a" style="left:28.4px;top:251.25px" width="6" height="6" viewBox="0 0 6 6"><path d="M5.5 0.5 L5.5 5.5 L0.5 5.5 Z" fill="#5a5a5a"/></svg>
<svg class="a" style="left:38px;top:245.25px" width="15" height="15" viewBox="0 0 15 15"><path d="M1 3 h5 l1.5 1.5 h6.5 v2 h-12 z" fill="#e9c47c"/><path d="M0.5 13 l2.5 -6.5 h12 l-2.5 6.5 z" fill="#f0cf8c"/><path d="M1 3 v10" stroke="#e0b46a" stroke-width="1"/></svg>
<div class="a tt" style="left:72.5px;top:248.25px;">Shop Floor</div>
<svg class="a" style="left:54px;top:261.00px" width="15" height="15" viewBox="0 0 15 15"><path d="M1.5 1.5h11v9l-2 2.5h-9z" fill="#fff" stroke="#8a8a8a" stroke-dasharray="none"/><path d="M3 4h3M7 4h4M3 7h3" stroke="#3b7bd0" stroke-width="1"/><circle cx="9.5" cy="10" r="2.5" fill="#fff" stroke="#555" stroke-width="1.2"/><path d="M11.3 11.8l2.2 2.2" stroke="#555" stroke-width="1.5"/></svg>
<div class="a tt" style="left:87.8px;top:264.00px;">SF Shop Order Master List</div>
<svg class="a" style="left:54px;top:276.75px" width="15" height="15" viewBox="0 0 15 15"><rect x="1.5" y="3.5" width="12" height="11" fill="#fff" stroke="#7a7a7a"/><rect x="1" y="2.5" width="13" height="3" fill="#2f6fc0"/><path d="M4 1v3M11 1v3" stroke="#2f6fc0" stroke-width="1"/><path d="M6 9.5h6M4 12h8M7.5 7.5v6M10 7.5v6" stroke="#9a9a9a" stroke-width="0.8"/></svg>
<div class="a tt" style="left:87.8px;top:279.75px;">SF Labor Daily Summary</div>
<svg class="a" style="left:54px;top:292.50px" width="15" height="15" viewBox="0 0 15 15"><rect x="1.5" y="3.5" width="12" height="11" fill="#fff" stroke="#7a7a7a"/><rect x="1" y="2.5" width="13" height="3" fill="#2f6fc0"/><path d="M4 1v3M11 1v3" stroke="#2f6fc0" stroke-width="1"/><path d="M6 9.5h6M4 12h8M7.5 7.5v6M10 7.5v6" stroke="#9a9a9a" stroke-width="0.8"/></svg>
<div class="a tt" style="left:87.8px;top:295.50px;">SF Labor History Daily Summary</div>
<svg class="a" style="left:28.4px;top:314.25px" width="6" height="6" viewBox="0 0 6 6"><path d="M5.5 0.5 L5.5 5.5 L0.5 5.5 Z" fill="#5a5a5a"/></svg>
<svg class="a" style="left:38px;top:308.25px" width="15" height="15" viewBox="0 0 15 15"><path d="M1 3 h5 l1.5 1.5 h6.5 v2 h-12 z" fill="#e9c47c"/><path d="M0.5 13 l2.5 -6.5 h12 l-2.5 6.5 z" fill="#f0cf8c"/><path d="M1 3 v10" stroke="#e0b46a" stroke-width="1"/></svg>
<div class="a tt" style="left:72.5px;top:311.25px;">Shop Floor Desktop</div>
<svg class="a" style="left:54px;top:324.00px" width="15" height="15" viewBox="0 0 15 15"><polygon points="10.50,9.50 10.40,10.48 8.83,10.88 8.49,11.50 9.04,13.04 8.28,13.66 6.88,12.83 6.20,13.03 5.50,14.50 4.52,14.40 4.12,12.83 3.50,12.49 1.96,13.04 1.34,12.28 2.17,10.88 1.97,10.20 0.50,9.50 0.60,8.52 2.17,8.12 2.51,7.50 1.96,5.96 2.72,5.34 4.12,6.17 4.80,5.97 5.50,4.50 6.48,4.60 6.88,6.17 7.50,6.51 9.04,5.96 9.66,6.72 8.83,8.12 9.03,8.80" fill="#6a6a6a"/><circle cx="5.5" cy="9.5" r="1.50" fill="#fff"/><polygon points="15.00,3.50 14.93,4.18 13.83,4.46 13.60,4.90 13.97,5.97 13.44,6.41 12.46,5.83 11.99,5.97 11.50,7.00 10.82,6.93 10.54,5.83 10.10,5.60 9.03,5.97 8.59,5.44 9.17,4.46 9.03,3.99 8.00,3.50 8.07,2.82 9.17,2.54 9.40,2.10 9.03,1.03 9.56,0.59 10.54,1.17 11.01,1.03 11.50,0.00 12.18,0.07 12.46,1.17 12.90,1.40 13.97,1.03 14.41,1.56 13.83,2.54 13.97,3.01" fill="#6a6a6a"/><circle cx="11.5" cy="3.5" r="1.05" fill="#fff"/></svg>
<div class="a tt" style="left:87.8px;top:327.00px;">SF Desktop Console</div>
<svg class="a" style="left:54px;top:339.75px" width="15" height="15" viewBox="0 0 15 15"><polygon points="11.50,6.50 11.39,7.57 9.66,8.02 9.29,8.70 9.89,10.39 9.06,11.07 7.52,10.16 6.77,10.38 6.00,12.00 4.93,11.89 4.48,10.16 3.80,9.79 2.11,10.39 1.43,9.56 2.34,8.02 2.12,7.27 0.50,6.50 0.61,5.43 2.34,4.98 2.71,4.30 2.11,2.61 2.94,1.93 4.48,2.84 5.23,2.62 6.00,1.00 7.07,1.11 7.52,2.84 8.20,3.21 9.89,2.61 10.57,3.44 9.66,4.98 9.88,5.73" fill="#6a6a6a"/><circle cx="6" cy="6.5" r="1.65" fill="#fff"/><path d="M6 14.5 l1-2.5 6-6 1.5 1.5 -6 6z" fill="#3a7bd5"/></svg>
<div class="a tt" style="left:87.8px;top:342.75px;">SF Report Production</div>
<svg class="a" style="left:54px;top:355.50px" width="15" height="15" viewBox="0 0 15 15"><polygon points="11.50,6.50 11.39,7.57 9.66,8.02 9.29,8.70 9.89,10.39 9.06,11.07 7.52,10.16 6.77,10.38 6.00,12.00 4.93,11.89 4.48,10.16 3.80,9.79 2.11,10.39 1.43,9.56 2.34,8.02 2.12,7.27 0.50,6.50 0.61,5.43 2.34,4.98 2.71,4.30 2.11,2.61 2.94,1.93 4.48,2.84 5.23,2.62 6.00,1.00 7.07,1.11 7.52,2.84 8.20,3.21 9.89,2.61 10.57,3.44 9.66,4.98 9.88,5.73" fill="#6a6a6a"/><circle cx="6" cy="6.5" r="1.65" fill="#fff"/><path d="M9 10l5 5M14 10l-5 5" stroke="#e02a2a" stroke-width="1.6"/></svg>
<div class="a tt" style="left:87.8px;top:358.50px;">SF Report FG Rejects</div>
<svg class="a" style="left:54px;top:371.25px" width="15" height="15" viewBox="0 0 15 15"><path d="M2 5 l6-3 6 3 v7 l-6 3 -6-3z" fill="#c9994f"/><path d="M2 5 l6 3 6-3" fill="none" stroke="#f3d9a6" stroke-width="1"/><path d="M8 8 v7" stroke="#a8763a" stroke-width="1"/><path d="M4.5 3.8 l6 3" stroke="#f3d9a6" stroke-width="1.2"/><path d="M0 1.5h5" stroke="#e03030" stroke-width="1.5"/></svg>
<div class="a tt" style="left:87.8px;top:374.25px;">SF Return Material</div>
<svg class="a" style="left:54px;top:387.00px" width="15" height="15" viewBox="0 0 15 15"><path d="M2 5 l6-3 6 3 v7 l-6 3 -6-3z" fill="#c9994f"/><path d="M2 5 l6 3 6-3" fill="none" stroke="#f3d9a6" stroke-width="1"/><path d="M8 8 v7" stroke="#a8763a" stroke-width="1"/><path d="M4.5 3.8 l6 3" stroke="#f3d9a6" stroke-width="1.2"/><path d="M0 12.5h6M4 10.5l2.5 2 -2.5 2" stroke="#2f6fc0" stroke-width="1.5" fill="none"/></svg>
<div class="a tt" style="left:87.8px;top:390.00px;">SF Issue Material</div>
<svg class="a" style="left:54px;top:402.75px" width="15" height="15" viewBox="0 0 15 15"><path d="M3 2v10.5h3M3 7h3" stroke="#666" fill="none"/><rect x="1" y="0.5" width="5" height="2" fill="#2f6fc0"/><rect x="6" y="4" width="8" height="2.5" fill="#2f6fc0"/><rect x="6" y="8" width="8" height="2.5" fill="#2f6fc0"/><rect x="6" y="11.5" width="8" height="2.5" fill="#2f6fc0"/></svg>
<div class="a tt" style="left:87.8px;top:405.75px;">SF Online Issue Materials</div>
<svg class="a" style="left:54px;top:418.50px" width="15" height="15" viewBox="0 0 15 15"><rect x="0.5" y="1.5" width="14" height="12" fill="#fff" stroke="#777"/><rect x="0.5" y="1.5" width="14" height="2.5" fill="#666"/><path d="M0.5 7h14M0.5 10h14M4 4v9.5M7.5 4v9.5M11 4v9.5" stroke="#bbb" stroke-width="0.7"/><rect x="4" y="7" width="3" height="3" fill="#e03a2a"/><rect x="7.5" y="10" width="3" height="3" fill="#6aaa8a"/></svg>
<div class="a tt" style="left:87.8px;top:421.50px;">SF Shop Floor Calendar</div>
<svg class="a" style="left:28.4px;top:440.25px" width="6" height="6" viewBox="0 0 6 6"><path d="M5.5 0.5 L5.5 5.5 L0.5 5.5 Z" fill="#5a5a5a"/></svg>
<svg class="a" style="left:38px;top:434.25px" width="15" height="15" viewBox="0 0 15 15"><path d="M1 3 h5 l1.5 1.5 h6.5 v2 h-12 z" fill="#e9c47c"/><path d="M0.5 13 l2.5 -6.5 h12 l-2.5 6.5 z" fill="#f0cf8c"/><path d="M1 3 v10" stroke="#e0b46a" stroke-width="1"/></svg>
<div class="a tt" style="left:72.5px;top:437.25px;">Shop Floor Time Tracking</div>
<svg class="a" style="left:54px;top:450.00px" width="15" height="15" viewBox="0 0 15 15"><path d="M2 0.5v5M-0.5 3h5" stroke="#3a9a6a" stroke-width="1.5"/><rect x="6.5" y="1.5" width="8" height="11" fill="#fff" stroke="#888"/><path d="M8 4h5M8 7h5M8 10h5" stroke="#888" stroke-width="0.8"/><circle cx="5" cy="9" r="2" fill="#3a9a6a"/><path d="M1.5 15 q3.5-5 7 0z" fill="#3a9a6a"/><circle cx="9.5" cy="10" r="1.8" fill="#2f6fc0"/><path d="M6.5 15 q3-4.5 6 0z" fill="#2f6fc0"/></svg>
<div class="a tt" style="left:87.8px;top:453.00px;">SF Hours Entry Login</div>
<svg class="a" style="left:54px;top:465.75px" width="15" height="15" viewBox="0 0 15 15"><rect x="0.5" y="0.5" width="12" height="13" fill="#fff" stroke="#777"/><path d="M2 3l1 1 2-2M2 7l1 1 2-2M2 11l1 1 2-2" stroke="#2f6fc0" fill="none"/><path d="M6 3.5h5M6 7.5h5M6 11h3" stroke="#999"/><path d="M12 10v5M9.5 12.5h5" stroke="#3a9a6a" stroke-width="1.5"/></svg>
<div class="a tt" style="left:87.8px;top:468.75px;">SF Post Tracked Hours</div>
<svg class="a" style="left:54px;top:481.50px" width="15" height="15" viewBox="0 0 15 15"><path d="M1.5 0.5h8l3 3v11h-11z" fill="#fff" stroke="#777"/><rect x="3" y="6" width="7" height="6" fill="#fff" stroke="#8a5ac0" stroke-width="0.8"/><path d="M3 8h7M3 10h7M6 6v6" stroke="#8a5ac0" stroke-width="0.6"/></svg>
<div class="a tt" style="left:87.8px;top:484.50px;">SF Review Hours History</div>
<svg class="a" style="left:54px;top:497.25px" width="15" height="15" viewBox="0 0 15 15"><path d="M1.5 0.5h8l3 3v8h-11z" fill="#fff" stroke="#777"/><polygon points="8.70,6.00 8.64,6.62 7.63,6.88 7.42,7.28 7.76,8.26 7.28,8.66 6.38,8.13 5.95,8.26 5.50,9.20 4.88,9.14 4.62,8.13 4.22,7.92 3.24,8.26 2.84,7.78 3.37,6.88 3.24,6.45 2.30,6.00 2.36,5.38 3.37,5.12 3.58,4.72 3.24,3.74 3.72,3.34 4.62,3.87 5.05,3.74 5.50,2.80 6.12,2.86 6.38,3.87 6.78,4.08 7.76,3.74 8.16,4.22 7.63,5.12 7.76,5.55" fill="#666"/><circle cx="5.5" cy="6" r="0.96" fill="#fff"/><path d="M9 9.5l5 5M14 9.5l-5 5" stroke="#e02a2a" stroke-width="1.6"/></svg>
<div class="a tt" style="left:87.8px;top:500.25px;">SF Review Downtime</div>
<svg class="a" style="left:54px;top:513.00px" width="15" height="15" viewBox="0 0 15 15"><rect x="1.5" y="0.5" width="12" height="11" fill="#fff" stroke="#777"/><path d="M3 3h9M3 5.5h4" stroke="#999"/><circle cx="3.5" cy="12" r="2.2" fill="#e04a2a"/><path d="M6 6l0.5 4" stroke="#8a5ac0"/><circle cx="10" cy="9.5" r="2.5" fill="#fff" stroke="#555" stroke-width="1.2"/><path d="M11.8 11.3l2.5 2.5" stroke="#555" stroke-width="1.5"/></svg>
<div class="a tt" style="left:87.8px;top:516.00px;">SF Review Tracked Hours</div>
<svg class="a" style="left:28.4px;top:534.75px" width="6" height="6" viewBox="0 0 6 6"><path d="M5.5 0.5 L5.5 5.5 L0.5 5.5 Z" fill="#5a5a5a"/></svg>
<svg class="a" style="left:38px;top:528.75px" width="15" height="15" viewBox="0 0 15 15"><path d="M1 3 h5 l1.5 1.5 h6.5 v2 h-12 z" fill="#e9c47c"/><path d="M0.5 13 l2.5 -6.5 h12 l-2.5 6.5 z" fill="#f0cf8c"/><path d="M1 3 v10" stroke="#e0b46a" stroke-width="1"/></svg>
<div class="a tt" style="left:72.5px;top:531.75px;">Shop Floor Reports</div>
<svg class="a" style="left:54px;top:544.50px" width="15" height="15" viewBox="0 0 15 15"><rect x="0.5" y="1.5" width="14" height="12" fill="#fff" stroke="#555"/><rect x="0.5" y="1.5" width="14" height="3" fill="#555"/><path d="M2.5 10.5h10" stroke="#999"/></svg>
<div class="a tt" style="left:87.8px;top:547.50px;">SF Order Reconciliation</div>
<svg class="a" style="left:54px;top:560.25px" width="15" height="15" viewBox="0 0 15 15"><rect x="4" y="0.5" width="7" height="4" fill="#fff" stroke="#666"/><rect x="1" y="4.5" width="13" height="6" rx="1" fill="#888"/><rect x="3.5" y="8.5" width="8" height="5" fill="#fff" stroke="#666"/><path d="M3 3.5h9" stroke="#2f6fc0"/></svg>
<div class="a tt" style="left:87.8px;top:563.25px;">SF Production Label Reprint</div>
<svg class="a" style="left:54px;top:576.00px" width="15" height="15" viewBox="0 0 15 15"><path d="M1.5 0.5h7l2 2v9h-9z" fill="#fff" stroke="#777"/><path d="M3 4h5M3 6h3" stroke="#8a5ac0"/><rect x="5.5" y="7.5" width="9" height="5" rx="1" fill="#777"/><rect x="7" y="11" width="6" height="3.5" fill="#fff" stroke="#666"/><rect x="7" y="6" width="6" height="2" fill="#fff" stroke="#666" stroke-width=".6"/></svg>
<div class="a tt" style="left:87.8px;top:579.00px;">SF Print Pick Ticket</div>
<svg class="a" style="left:54px;top:591.75px" width="15" height="15" viewBox="0 0 15 15"><path d="M1.5 0.5h7l2 2v9h-9z" fill="#fff" stroke="#777"/><path d="M3 4h5M3 6h3" stroke="#8a5ac0"/><rect x="5.5" y="7.5" width="9" height="5" rx="1" fill="#777"/><rect x="7" y="11" width="6" height="3.5" fill="#fff" stroke="#666"/><rect x="7" y="6" width="6" height="2" fill="#fff" stroke="#666" stroke-width=".6"/></svg>
<div class="a tt" style="left:87.8px;top:594.75px;">SF Print Packet</div>
<svg class="a" style="left:54px;top:607.50px" width="15" height="15" viewBox="0 0 15 15"><rect x="1" y="7" width="3" height="8" fill="#2f6fc0"/><rect x="5.5" y="3" width="3" height="12" fill="#e8b030"/><rect x="10" y="0" width="3" height="15" fill="#555"/></svg>
<div class="a tt" style="left:87.8px;top:610.50px;">SF Produced FG Units by Day</div>
<div class="a" style="left:6px;top:719px;width:255px;height:12px;background:#f0f0f0;border-bottom:1px solid #dadada"></div>
<div class="a" style="left:123.0px;top:725px;width:1.6px;height:1.6px;background:#555;border-radius:1px"></div>
<div class="a" style="left:126.4px;top:725px;width:1.6px;height:1.6px;background:#555;border-radius:1px"></div>
<div class="a" style="left:129.8px;top:725px;width:1.6px;height:1.6px;background:#555;border-radius:1px"></div>
<div class="a" style="left:133.2px;top:725px;width:1.6px;height:1.6px;background:#555;border-radius:1px"></div>
<div class="a" style="left:136.6px;top:725px;width:1.6px;height:1.6px;background:#555;border-radius:1px"></div>
<div class="a" style="left:140.0px;top:725px;width:1.6px;height:1.6px;background:#555;border-radius:1px"></div>
<div class="a" style="left:6px;top:732px;width:255px;height:37px;background:#e6e6e6"></div>
<svg class="a" style="left:38px;top:740px" width="20" height="21" viewBox="0 0 20 21"><defs><radialGradient id="stg" cx=".4" cy=".35" r=".7"><stop offset="0" stop-color="#fff7b0"/><stop offset=".6" stop-color="#f2c533"/><stop offset="1" stop-color="#d99a10"/></radialGradient></defs><g transform="rotate(-8 10 10)"><path d="M10 1 L12.6 7 L19 7.4 L14 11.6 L15.8 18.5 L10 14.6 L4.2 18.5 L6 11.6 L1 7.4 L7.4 7 Z" fill="url(#stg)" stroke="#6e5a2a" stroke-width=".9" stroke-linejoin="round"/></g></svg>
<svg class="a" style="left:78px;top:742px" width="18" height="17" viewBox="0 0 18 17"><defs><linearGradient id="bxg" x1="0" y1="0" x2="1" y2="1"><stop offset="0" stop-color="#f7c060"/><stop offset="1" stop-color="#b8720a"/></linearGradient></defs><path d="M6 1.5h7.5v6.5h-7.5z" fill="url(#bxg)" stroke="#9a5a08" stroke-width=".6"/><path d="M1 8.5h8v7.5h-8z" fill="url(#bxg)" stroke="#9a5a08" stroke-width=".6"/><path d="M9 7.5h8v8.5h-8z" fill="url(#bxg)" stroke="#9a5a08" stroke-width=".6"/></svg>
<svg class="a" style="left:118px;top:740px" width="14" height="21" viewBox="0 0 14 21"><rect x="2" y="3" width="10" height="14" rx="1" fill="#f4eed8" stroke="#b08a40"/><rect x="5" y="1" width="4" height="3" fill="#999"/><path d="M4 7h6M4 9.5h6M4 12h4" stroke="#aaa" stroke-width=".7"/><rect x="0.5" y="12" width="3.5" height="5" fill="#d8a030"/><rect x="3" y="16" width="9" height="4" rx="1" fill="#4a7a5a"/></svg>
<svg class="a" style="left:157px;top:741px" width="16" height="19" viewBox="0 0 16 19"><rect x="1.5" y="2" width="13" height="15" rx="1.5" fill="#f8f8f8" stroke="#555"/><rect x="1.5" y="2" width="13" height="5" fill="#d02a2a"/><text x="8" y="14.5" font-size="7.5" font-weight="bold" text-anchor="middle" font-family="Liberation Sans" fill="#222">15</text></svg>
<svg class="a" style="left:193px;top:741px" width="19" height="19" viewBox="0 0 19 19"><path d="M8.5 1.5l8.5 1v15l-8.5-1z" fill="#c8d8e0" stroke="#6a7a8a" stroke-width=".7"/><path d="M10.5 5l5 .5M10.5 8l5 .5M10.5 11l5 .5" stroke="#4a8a9a" stroke-width=".8"/><path d="M1 8h8v8h-8z" fill="#e0a030" stroke="#9a5a08" stroke-width=".6"/></svg>
<div class="a" style="left:233.0px;top:749.2px;width:3.4px;height:3.4px;background:#555;border-radius:2px"></div>
<div class="a" style="left:240.05px;top:749.2px;width:3.4px;height:3.4px;background:#555;border-radius:2px"></div>
<div class="a" style="left:247.1px;top:749.2px;width:3.4px;height:3.4px;background:#555;border-radius:2px"></div>
<div class="a" style="left:269px;top:212px;width:1385px;height:395px;background:#f8f8fa;border:1px solid #b6b9c1"></div>
<div class="a" style="left:270px;top:213px;width:1383px;height:34px;background:linear-gradient(90deg,#e9eaee 0%,#e9eaee 85%,#ebe6ef 100%)"></div>
<svg class="a" style="left:1490px;top:213px;opacity:.65" width="163" height="34" viewBox="1490 213 163 34"><defs><linearGradient id="sw" x1="0" x2="1"><stop offset="0" stop-color="#e9e3ef" stop-opacity="0"/><stop offset=".5" stop-color="#e6d8ee"/><stop offset="1" stop-color="#e3d6ef"/></linearGradient></defs><polygon points="1490,247 1560,213 1653,213 1653,247" fill="url(#sw)"/><polygon points="1533,247 1571,213 1588,213 1547,247" fill="#eeecf2"/><polygon points="1547,247 1588,213 1653,213 1653,222 1618,247" fill="#dccdef"/><polygon points="1560,247 1600,216 1612,214 1575,247" fill="#d2bfea" opacity=".7"/><polygon points="1598,247 1638,215 1646,215 1606,247" fill="#cbb6e6" opacity=".8"/><polygon points="1618,247 1653,222 1653,247" fill="#e2d6f0"/></svg>
<div class="a" style="left:276px;top:222px;width:61px;height:17px;background:#f4f4f6;border:1px solid #cbcdd3"></div>
<div class="a gt" style="left:281px;top:225px;">Ord No</div>
<svg class="a" style="left:322px;top:227px" width="8" height="6"><path d="M0 5 L4 1 L8 5 Z" fill="#222"/></svg>
<div class="a" style="left:270px;top:247px;width:1383px;height:17px;background:#f3f4f7;border-top:1px solid #d3d5db;border-bottom:1px solid #d3d5db"></div>
<div class="cb" style="left:283px;top:250px"></div>
<div class="a" style="left:305.5px;top:248px;width:1px;height:16px;background:#d5d7dc"></div>
<div class="a gt" style="left:309.5px;top:249.5px;">Ord Status</div>
<div class="a" style="left:368.5px;top:248px;width:1px;height:16px;background:#d5d7dc"></div>
<div class="a gt" style="left:372.5px;top:249.5px;">Oper No</div>
<div class="a" style="left:412.2px;top:248px;width:1px;height:16px;background:#d5d7dc"></div>
<div class="a gt" style="left:416.2px;top:249.5px;">Dept</div>
<div class="a" style="left:456.5px;top:248px;width:1px;height:16px;background:#d5d7dc"></div>
<div class="a gt" style="left:460.5px;top:249.5px;">Wc</div>
<div class="a" style="left:501.5px;top:248px;width:1px;height:16px;background:#d5d7dc"></div>
<div class="a gt" style="left:505.5px;top:249.5px;">Mach No</div>
<div class="a" style="left:576.4px;top:248px;width:1px;height:16px;background:#d5d7dc"></div>
<div class="a gt" style="left:580.4px;top:249.5px;">Cnt Pnt</div>
<div class="a" style="left:625.3px;top:248px;width:1px;height:16px;background:#d5d7dc"></div>
<div class="a gt" style="left:629.3px;top:249.5px;">Item No</div>
<div class="a" style="left:754.2px;top:248px;width:1px;height:16px;background:#d5d7dc"></div>
<div class="a gt" style="left:758.2px;top:249.5px;">Item Desc 1</div>
<div class="a" style="left:894.9px;top:248px;width:1px;height:16px;background:#d5d7dc"></div>
<div class="a gt" style="left:898.9px;top:249.5px;">Qty</div>
<div class="a" style="left:948.3px;top:248px;width:1px;height:16px;background:#d5d7dc"></div>
<div class="a gt" style="left:952.3px;top:249.5px;">Qty Compl</div>
<div class="a" style="left:1009.4px;top:248px;width:1px;height:16px;background:#d5d7dc"></div>
<div class="a gt" style="left:1013.4px;top:249.5px;">Qty Rej 1</div>
<div class="a" style="left:1058.1px;top:248px;width:1px;height:16px;background:#d5d7dc"></div>
<div class="a gt" style="left:1062.1px;top:249.5px;">Act Qty Scrap</div>
<div class="a" style="left:1125.2px;top:248px;width:1px;height:16px;background:#d5d7dc"></div>
<div class="a gt" style="left:1129.2px;top:249.5px;">Uom</div>
<div class="a" style="left:1161.2px;top:248px;width:1px;height:16px;background:#d5d7dc"></div>
<div class="a gt" style="left:1165.2px;top:249.5px;">Start Dt</div>
<div class="a" style="left:1218.1px;top:248px;width:1px;height:16px;background:#d5d7dc"></div>
<div class="a gt" style="left:1222.1px;top:249.5px;">Due Dt</div>
<div class="a" style="left:1275.1px;top:248px;width:1px;height:16px;background:#d5d7dc"></div>
<div class="a gt" style="left:1279.1px;top:249.5px;">Compl Dt</div>
<div class="a" style="left:1330px;top:248px;width:1px;height:16px;background:#d5d7dc"></div>
<div class="a gt" style="left:1334px;top:249.5px;">Ser Lot Fg</div>
<div class="a" style="left:1390.1px;top:248px;width:1px;height:16px;background:#d5d7dc"></div>
<div class="a gt" style="left:1394.1px;top:249.5px;">Bin Fg</div>
<div class="a" style="left:1433.1px;top:248px;width:1px;height:16px;background:#d5d7dc"></div>
<div class="a gt" style="left:1437.1px;top:249.5px;">Acc Act Lbr Hr</div>
<div class="a" style="left:1502px;top:248px;width:1px;height:16px;background:#d5d7dc"></div>
<div class="a gt" style="left:1506px;top:249.5px;">Acc Act Mch Hr</div>
<div class="a" style="left:1574px;top:248px;width:1px;height:16px;background:#d5d7dc"></div>
<div class="a gt" style="left:1578px;top:249.5px;">Backflush Lbr</div>
<div class="a" style="left:1647.4px;top:248px;width:1px;height:16px;background:#d5d7dc"></div>
<div class="a" style="left:270px;top:264px;width:1368px;height:17px;background:#fff"></div>
<div class="a" style="left:305.5px;top:264px;width:1px;height:17px;background:#dcdee3"></div>
<div class="a" style="left:368.5px;top:264px;width:1px;height:17px;background:#dcdee3"></div>
<div class="a" style="left:412.2px;top:264px;width:1px;height:17px;background:#dcdee3"></div>
<div class="a" style="left:456.5px;top:264px;width:1px;height:17px;background:#dcdee3"></div>
<div class="a" style="left:501.5px;top:264px;width:1px;height:17px;background:#dcdee3"></div>
<div class="a" style="left:576.4px;top:264px;width:1px;height:17px;background:#dcdee3"></div>
<div class="a" style="left:625.3px;top:264px;width:1px;height:17px;background:#dcdee3"></div>
<div class="a" style="left:754.2px;top:264px;width:1px;height:17px;background:#dcdee3"></div>
<div class="a" style="left:894.9px;top:264px;width:1px;height:17px;background:#dcdee3"></div>
<div class="a" style="left:948.3px;top:264px;width:1px;height:17px;background:#dcdee3"></div>
<div class="a" style="left:1009.4px;top:264px;width:1px;height:17px;background:#dcdee3"></div>
<div class="a" style="left:1058.1px;top:264px;width:1px;height:17px;background:#dcdee3"></div>
<div class="a" style="left:1125.2px;top:264px;width:1px;height:17px;background:#dcdee3"></div>
<div class="a" style="left:1161.2px;top:264px;width:1px;height:17px;background:#dcdee3"></div>
<div class="a" style="left:1218.1px;top:264px;width:1px;height:17px;background:#dcdee3"></div>
<div class="a" style="left:1275.1px;top:264px;width:1px;height:17px;background:#dcdee3"></div>
<div class="a" style="left:1330px;top:264px;width:1px;height:17px;background:#dcdee3"></div>
<div class="a" style="left:1390.1px;top:264px;width:1px;height:17px;background:#dcdee3"></div>
<div class="a" style="left:1433.1px;top:264px;width:1px;height:17px;background:#dcdee3"></div>
<div class="a" style="left:1502px;top:264px;width:1px;height:17px;background:#dcdee3"></div>
<div class="a" style="left:1574px;top:264px;width:1px;height:17px;background:#dcdee3"></div>
<div class="a" style="left:270px;top:281px;width:1368px;height:2px;background:#d2d4da"></div>
<div class="a" style="left:1638px;top:264px;width:15px;height:328px;background:#f4f4f7"></div>
<svg class="a" style="left:1641px;top:270px" width="8" height="5"><path d="M0 5 L4 0 L8 5 Z" fill="#9a9ca4"/></svg>
<div class="a" style="left:1642px;top:283px;width:6px;height:75px;background:#fff;border:1px solid #c3c5cc;border-radius:3px"></div>
<svg class="a" style="left:1641px;top:582px" width="8" height="5"><path d="M0 0 L4 5 L8 0 Z" fill="#7f818a"/></svg>
<div class="a" style="left:270px;top:283.0px;width:1368px;height:17.65px;background:#f8f8fa;border-top:1px solid #dcdde3"></div>
<svg class="a" style="left:276px;top:289.00px" width="7" height="5"><path d="M0 0 L7 0 L3.5 4 Z" fill="#6e7079"/></svg>
<div class="cb" style="left:290px;top:285.50px"></div>
<div class="a gb" style="left:306px;top:286.80px;">Ord No:</div>
<div class="a gb" style="left:360px;top:286.80px;">21</div>
<div class="a" style="left:270px;top:283px;width:1368px;height:1px;background:#f8f8fa"></div>
<div class="a" style="left:288px;top:300.5px;width:1350px;height:17.65px;background:#f6f5fc;border-top:1px solid #dcdde3"></div>
<div class="cb" style="left:291px;top:303.00px"></div>
<div class="a" style="left:305.5px;top:300.5px;width:1px;height:16.65px;background:#dcdee3"></div>
<div class="a gt" style="left:309.50px;top:303.10px;">C</div>
<div class="a" style="left:368.5px;top:300.5px;width:1px;height:16.65px;background:#dcdee3"></div>
<div class="a gt gr" style="right:1281.80px;top:303.10px">10</div>
<div class="a" style="left:412.2px;top:300.5px;width:1px;height:16.65px;background:#dcdee3"></div>
<div class="a gt" style="left:416.20px;top:303.10px;">DEPTA</div>
<div class="a" style="left:456.5px;top:300.5px;width:1px;height:16.65px;background:#dcdee3"></div>
<div class="a gt" style="left:460.50px;top:303.10px;">WC1</div>
<div class="a" style="left:501.5px;top:300.5px;width:1px;height:16.65px;background:#dcdee3"></div>
<div class="a" style="left:576.4px;top:300.5px;width:1px;height:16.65px;background:#dcdee3"></div>
<div class="a" style="left:625.3px;top:300.5px;width:1px;height:16.65px;background:#dcdee3"></div>
<div class="a gt" style="left:629.30px;top:303.10px;">BIKEAS</div>
<div class="a" style="left:754.2px;top:300.5px;width:1px;height:16.65px;background:#dcdee3"></div>
<div class="a gt" style="left:758.20px;top:303.10px;">Adventure Bike, LW, Black</div>
<div class="a" style="left:894.9px;top:300.5px;width:1px;height:16.65px;background:#dcdee3"></div>
<div class="a gt gr" style="right:745.70px;top:303.10px">15.0000</div>
<div class="a" style="left:948.3px;top:300.5px;width:1px;height:16.65px;background:#dcdee3"></div>
<div class="a" style="left:949.3px;top:301.5px;width:60.10000000000002px;height:15.649999999999999px;background:#00ee00"></div>
<div class="a gt gr" style="right:684.60px;top:303.10px">15.0000</div>
<div class="a" style="left:1009.4px;top:300.5px;width:1px;height:16.65px;background:#dcdee3"></div>
<div class="a gt gr" style="right:635.90px;top:303.10px">.0000</div>
<div class="a" style="left:1058.1px;top:300.5px;width:1px;height:16.65px;background:#dcdee3"></div>
<div class="a gt gr" style="right:568.80px;top:303.10px">3.0000</div>
<div class="a" style="left:1125.2px;top:300.5px;width:1px;height:16.65px;background:#dcdee3"></div>
<div class="a gt" style="left:1129.20px;top:303.10px;">EA</div>
<div class="a" style="left:1161.2px;top:300.5px;width:1px;height:16.65px;background:#dcdee3"></div>
<div class="a gt" style="left:1165.20px;top:303.10px;">12/11/2001</div>
<div class="a" style="left:1218.1px;top:300.5px;width:1px;height:16.65px;background:#dcdee3"></div>
<div class="a gt" style="left:1222.10px;top:303.10px;">12/19/2001</div>
<div class="a" style="left:1275.1px;top:300.5px;width:1px;height:16.65px;background:#dcdee3"></div>
<div class="a gt" style="left:1279.10px;top:303.10px;">5/13/2002</div>
<div class="a" style="left:1330px;top:300.5px;width:1px;height:16.65px;background:#dcdee3"></div>
<div class="a gt" style="left:1334.00px;top:303.10px;">S</div>
<div class="a" style="left:1390.1px;top:300.5px;width:1px;height:16.65px;background:#dcdee3"></div>
<div class="a gt" style="left:1394.10px;top:303.10px;">N</div>
<div class="a" style="left:1433.1px;top:300.5px;width:1px;height:16.65px;background:#dcdee3"></div>
<div class="a gt gr" style="right:192.00px;top:303.10px">4.0000</div>
<div class="a" style="left:1502px;top:300.5px;width:1px;height:16.65px;background:#dcdee3"></div>
<div class="a gt gr" style="right:120.00px;top:303.10px">.0000</div>
<div class="a" style="left:1574px;top:300.5px;width:1px;height:16.65px;background:#dcdee3"></div>
<div class="a gt" style="left:1578.00px;top:303.10px;">N</div>
<div class="a" style="left:288px;top:317.15px;width:1350px;height:17.65px;background:#eff2f9;border-top:1px solid #dcdde3"></div>
<div class="cb" style="left:291px;top:319.65px"></div>
<div class="a" style="left:305.5px;top:317.15px;width:1px;height:16.65px;background:#dcdee3"></div>
<div class="a gt" style="left:309.50px;top:319.75px;">C</div>
<div class="a" style="left:368.5px;top:317.15px;width:1px;height:16.65px;background:#dcdee3"></div>
<div class="a gt gr" style="right:1281.80px;top:319.75px">20</div>
<div class="a" style="left:412.2px;top:317.15px;width:1px;height:16.65px;background:#dcdee3"></div>
<div class="a gt" style="left:416.20px;top:319.75px;">DEPTA</div>
<div class="a" style="left:456.5px;top:317.15px;width:1px;height:16.65px;background:#dcdee3"></div>
<div class="a gt" style="left:460.50px;top:319.75px;">WC1</div>
<div class="a" style="left:501.5px;top:317.15px;width:1px;height:16.65px;background:#dcdee3"></div>
<div class="a gt" style="left:505.50px;top:319.75px;">AUTO PRIME</div>
<div class="a" style="left:576.4px;top:317.15px;width:1px;height:16.65px;background:#dcdee3"></div>
<div class="a" style="left:625.3px;top:317.15px;width:1px;height:16.65px;background:#dcdee3"></div>
<div class="a gt" style="left:629.30px;top:319.75px;">BIKEAS</div>
<div class="a" style="left:754.2px;top:317.15px;width:1px;height:16.65px;background:#dcdee3"></div>
<div class="a gt" style="left:758.20px;top:319.75px;">Adventure Bike, LW, Black</div>
<div class="a" style="left:894.9px;top:317.15px;width:1px;height:16.65px;background:#dcdee3"></div>
<div class="a gt gr" style="right:745.70px;top:319.75px">5.0000</div>
<div class="a" style="left:948.3px;top:317.15px;width:1px;height:16.65px;background:#dcdee3"></div>
<div class="a" style="left:949.3px;top:318.15px;width:60.10000000000002px;height:15.649999999999999px;background:#00ee00"></div>
<div class="a gt gr" style="right:684.60px;top:319.75px">5.0000</div>
<div class="a" style="left:1009.4px;top:317.15px;width:1px;height:16.65px;background:#dcdee3"></div>
<div class="a gt gr" style="right:635.90px;top:319.75px">.0000</div>
<div class="a" style="left:1058.1px;top:317.15px;width:1px;height:16.65px;background:#dcdee3"></div>
<div class="a gt gr" style="right:568.80px;top:319.75px">.0000</div>
<div class="a" style="left:1125.2px;top:317.15px;width:1px;height:16.65px;background:#dcdee3"></div>
<div class="a gt" style="left:1129.20px;top:319.75px;">EA</div>
<div class="a" style="left:1161.2px;top:317.15px;width:1px;height:16.65px;background:#dcdee3"></div>
<div class="a gt" style="left:1165.20px;top:319.75px;">12/19/2001</div>
<div class="a" style="left:1218.1px;top:317.15px;width:1px;height:16.65px;background:#dcdee3"></div>
<div class="a gt" style="left:1222.10px;top:319.75px;">12/20/2001</div>
<div class="a" style="left:1275.1px;top:317.15px;width:1px;height:16.65px;background:#dcdee3"></div>
<div class="a gt" style="left:1279.10px;top:319.75px;">5/13/2002</div>
<div class="a" style="left:1330px;top:317.15px;width:1px;height:16.65px;background:#dcdee3"></div>
<div class="a gt" style="left:1334.00px;top:319.75px;">S</div>
<div class="a" style="left:1390.1px;top:317.15px;width:1px;height:16.65px;background:#dcdee3"></div>
<div class="a gt" style="left:1394.10px;top:319.75px;">N</div>
<div class="a" style="left:1433.1px;top:317.15px;width:1px;height:16.65px;background:#dcdee3"></div>
<div class="a gt gr" style="right:192.00px;top:319.75px">2.0000</div>
<div class="a" style="left:1502px;top:317.15px;width:1px;height:16.65px;background:#dcdee3"></div>
<div class="a gt gr" style="right:120.00px;top:319.75px">.0000</div>
<div class="a" style="left:1574px;top:317.15px;width:1px;height:16.65px;background:#dcdee3"></div>
<div class="a gt" style="left:1578.00px;top:319.75px;">N</div>
<div class="a" style="left:288px;top:333.8px;width:1350px;height:17.65px;background:#f6f5fc;border-top:1px solid #dcdde3"></div>
<div class="cb" style="left:291px;top:336.30px"></div>
<div class="a" style="left:305.5px;top:333.8px;width:1px;height:16.65px;background:#dcdee3"></div>
<div class="a gt" style="left:309.50px;top:336.40px;">C</div>
<div class="a" style="left:368.5px;top:333.8px;width:1px;height:16.65px;background:#dcdee3"></div>
<div class="a gt gr" style="right:1281.80px;top:336.40px">30</div>
<div class="a" style="left:412.2px;top:333.8px;width:1px;height:16.65px;background:#dcdee3"></div>
<div class="a gt" style="left:416.20px;top:336.40px;">DEPTA</div>
<div class="a" style="left:456.5px;top:333.8px;width:1px;height:16.65px;background:#dcdee3"></div>
<div class="a gt" style="left:460.50px;top:336.40px;">WC1</div>
<div class="a" style="left:501.5px;top:333.8px;width:1px;height:16.65px;background:#dcdee3"></div>
<div class="a" style="left:576.4px;top:333.8px;width:1px;height:16.65px;background:#dcdee3"></div>
<div class="a" style="left:625.3px;top:333.8px;width:1px;height:16.65px;background:#dcdee3"></div>
<div class="a gt" style="left:629.30px;top:336.40px;">BIKEAS</div>
<div class="a" style="left:754.2px;top:333.8px;width:1px;height:16.65px;background:#dcdee3"></div>
<div class="a gt" style="left:758.20px;top:336.40px;">Adventure Bike, LW, Black</div>
<div class="a" style="left:894.9px;top:333.8px;width:1px;height:16.65px;background:#dcdee3"></div>
<div class="a gt gr" style="right:745.70px;top:336.40px">5.0000</div>
<div class="a" style="left:948.3px;top:333.8px;width:1px;height:16.65px;background:#dcdee3"></div>
<div class="a" style="left:949.3px;top:334.8px;width:60.10000000000002px;height:15.649999999999999px;background:#00ee00"></div>
<div class="a gt gr" style="right:684.60px;top:336.40px">5.0000</div>
<div class="a" style="left:1009.4px;top:333.8px;width:1px;height:16.65px;background:#dcdee3"></div>
<div class="a gt gr" style="right:635.90px;top:336.40px">.0000</div>
<div class="a" style="left:1058.1px;top:333.8px;width:1px;height:16.65px;background:#dcdee3"></div>
<div class="a gt gr" style="right:568.80px;top:336.40px">.0000</div>
<div class="a" style="left:1125.2px;top:333.8px;width:1px;height:16.65px;background:#dcdee3"></div>
<div class="a gt" style="left:1129.20px;top:336.40px;">EA</div>
<div class="a" style="left:1161.2px;top:333.8px;width:1px;height:16.65px;background:#dcdee3"></div>
<div class="a gt" style="left:1165.20px;top:336.40px;">12/20/2001</div>
<div class="a" style="left:1218.1px;top:333.8px;width:1px;height:16.65px;background:#dcdee3"></div>
<div class="a gt" style="left:1222.10px;top:336.40px;">12/24/2001</div>
<div class="a" style="left:1275.1px;top:333.8px;width:1px;height:16.65px;background:#dcdee3"></div>
<div class="a gt" style="left:1279.10px;top:336.40px;">5/13/2002</div>
<div class="a" style="left:1330px;top:333.8px;width:1px;height:16.65px;background:#dcdee3"></div>
<div class="a gt" style="left:1334.00px;top:336.40px;">S</div>
<div class="a" style="left:1390.1px;top:333.8px;width:1px;height:16.65px;background:#dcdee3"></div>
<div class="a gt" style="left:1394.10px;top:336.40px;">N</div>
<div class="a" style="left:1433.1px;top:333.8px;width:1px;height:16.65px;background:#dcdee3"></div>
<div class="a gt gr" style="right:192.00px;top:336.40px">1.0000</div>
<div class="a" style="left:1502px;top:333.8px;width:1px;height:16.65px;background:#dcdee3"></div>
<div class="a gt gr" style="right:120.00px;top:336.40px">.0000</div>
<div class="a" style="left:1574px;top:333.8px;width:1px;height:16.65px;background:#dcdee3"></div>
<div class="a gt" style="left:1578.00px;top:336.40px;">N</div>
<div class="a" style="left:288px;top:350.45px;width:1350px;height:17.65px;background:#eff2f9;border-top:1px solid #dcdde3"></div>
<div class="cb" style="left:291px;top:352.95px"></div>
<div class="a" style="left:305.5px;top:350.45px;width:1px;height:16.65px;background:#dcdee3"></div>
<div class="a gt" style="left:309.50px;top:353.05px;">C</div>
<div class="a" style="left:368.5px;top:350.45px;width:1px;height:16.65px;background:#dcdee3"></div>
<div class="a gt gr" style="right:1281.80px;top:353.05px">40</div>
<div class="a" style="left:412.2px;top:350.45px;width:1px;height:16.65px;background:#dcdee3"></div>
<div class="a gt" style="left:416.20px;top:353.05px;">DEPTA</div>
<div class="a" style="left:456.5px;top:350.45px;width:1px;height:16.65px;background:#dcdee3"></div>
<div class="a gt" style="left:460.50px;top:353.05px;">WC1.A</div>
<div class="a" style="left:501.5px;top:350.45px;width:1px;height:16.65px;background:#dcdee3"></div>
<div class="a gt" style="left:505.50px;top:353.05px;">AUTO PRIME</div>
<div class="a" style="left:576.4px;top:350.45px;width:1px;height:16.65px;background:#dcdee3"></div>
<div class="a" style="left:625.3px;top:350.45px;width:1px;height:16.65px;background:#dcdee3"></div>
<div class="a gt" style="left:629.30px;top:353.05px;">BIKEAS</div>
<div class="a" style="left:754.2px;top:350.45px;width:1px;height:16.65px;background:#dcdee3"></div>
<div class="a gt" style="left:758.20px;top:353.05px;">Adventure Bike, LW, Black</div>
<div class="a" style="left:894.9px;top:350.45px;width:1px;height:16.65px;background:#dcdee3"></div>
<div class="a gt gr" style="right:745.70px;top:353.05px">5.0000</div>
<div class="a" style="left:948.3px;top:350.45px;width:1px;height:16.65px;background:#dcdee3"></div>
<div class="a" style="left:949.3px;top:351.45px;width:60.10000000000002px;height:15.649999999999999px;background:#00ee00"></div>
<div class="a gt gr" style="right:684.60px;top:353.05px">5.0000</div>
<div class="a" style="left:1009.4px;top:350.45px;width:1px;height:16.65px;background:#dcdee3"></div>
<div class="a gt gr" style="right:635.90px;top:353.05px">.0000</div>
<div class="a" style="left:1058.1px;top:350.45px;width:1px;height:16.65px;background:#dcdee3"></div>
<div class="a gt gr" style="right:568.80px;top:353.05px">2.0000</div>
<div class="a" style="left:1125.2px;top:350.45px;width:1px;height:16.65px;background:#dcdee3"></div>
<div class="a gt" style="left:1129.20px;top:353.05px;">EA</div>
<div class="a" style="left:1161.2px;top:350.45px;width:1px;height:16.65px;background:#dcdee3"></div>
<div class="a gt" style="left:1165.20px;top:353.05px;">12/24/2001</div>
<div class="a" style="left:1218.1px;top:350.45px;width:1px;height:16.65px;background:#dcdee3"></div>
<div class="a gt" style="left:1222.10px;top:353.05px;">12/27/2001</div>
<div class="a" style="left:1275.1px;top:350.45px;width:1px;height:16.65px;background:#dcdee3"></div>
<div class="a gt" style="left:1279.10px;top:353.05px;">5/13/2002</div>
<div class="a" style="left:1330px;top:350.45px;width:1px;height:16.65px;background:#dcdee3"></div>
<div class="a gt" style="left:1334.00px;top:353.05px;">S</div>
<div class="a" style="left:1390.1px;top:350.45px;width:1px;height:16.65px;background:#dcdee3"></div>
<div class="a gt" style="left:1394.10px;top:353.05px;">N</div>
<div class="a" style="left:1433.1px;top:350.45px;width:1px;height:16.65px;background:#dcdee3"></div>
<div class="a gt gr" style="right:192.00px;top:353.05px">3.0000</div>
<div class="a" style="left:1502px;top:350.45px;width:1px;height:16.65px;background:#dcdee3"></div>
<div class="a gt gr" style="right:120.00px;top:353.05px">.0000</div>
<div class="a" style="left:1574px;top:350.45px;width:1px;height:16.65px;background:#dcdee3"></div>
<div class="a gt" style="left:1578.00px;top:353.05px;">N</div>
<div class="a" style="left:288px;top:367.1px;width:1350px;height:17.65px;background:#f6f5fc;border-top:1px solid #dcdde3"></div>
<div class="cb" style="left:291px;top:369.60px"></div>
<div class="a" style="left:305.5px;top:367.1px;width:1px;height:16.65px;background:#dcdee3"></div>
<div class="a gt" style="left:309.50px;top:369.70px;">C</div>
<div class="a" style="left:368.5px;top:367.1px;width:1px;height:16.65px;background:#dcdee3"></div>
<div class="a gt gr" style="right:1281.80px;top:369.70px">50</div>
<div class="a" style="left:412.2px;top:367.1px;width:1px;height:16.65px;background:#dcdee3"></div>
<div class="a gt" style="left:416.20px;top:369.70px;">DEPTA</div>
<div class="a" style="left:456.5px;top:367.1px;width:1px;height:16.65px;background:#dcdee3"></div>
<div class="a gt" style="left:460.50px;top:369.70px;">WC1.B</div>
<div class="a" style="left:501.5px;top:367.1px;width:1px;height:16.65px;background:#dcdee3"></div>
<div class="a" style="left:576.4px;top:367.1px;width:1px;height:16.65px;background:#dcdee3"></div>
<div class="a" style="left:625.3px;top:367.1px;width:1px;height:16.65px;background:#dcdee3"></div>
<div class="a gt" style="left:629.30px;top:369.70px;">BIKEAS</div>
<div class="a" style="left:754.2px;top:367.1px;width:1px;height:16.65px;background:#dcdee3"></div>
<div class="a gt" style="left:758.20px;top:369.70px;">Adventure Bike, LW, Black</div>
<div class="a" style="left:894.9px;top:367.1px;width:1px;height:16.65px;background:#dcdee3"></div>
<div class="a gt gr" style="right:745.70px;top:369.70px">5.0000</div>
<div class="a" style="left:948.3px;top:367.1px;width:1px;height:16.65px;background:#dcdee3"></div>
<div class="a" style="left:949.3px;top:368.1px;width:60.10000000000002px;height:15.649999999999999px;background:#00ee00"></div>
<div class="a gt gr" style="right:684.60px;top:369.70px">5.0000</div>
<div class="a" style="left:1009.4px;top:367.1px;width:1px;height:16.65px;background:#dcdee3"></div>
<div class="a gt gr" style="right:635.90px;top:369.70px">.0000</div>
<div class="a" style="left:1058.1px;top:367.1px;width:1px;height:16.65px;background:#dcdee3"></div>
<div class="a gt gr" style="right:568.80px;top:369.70px">.0000</div>
<div class="a" style="left:1125.2px;top:367.1px;width:1px;height:16.65px;background:#dcdee3"></div>
<div class="a gt" style="left:1129.20px;top:369.70px;">EA</div>
<div class="a" style="left:1161.2px;top:367.1px;width:1px;height:16.65px;background:#dcdee3"></div>
<div class="a gt" style="left:1165.20px;top:369.70px;">12/27/2001</div>
<div class="a" style="left:1218.1px;top:367.1px;width:1px;height:16.65px;background:#dcdee3"></div>
<div class="a gt" style="left:1222.10px;top:369.70px;">12/31/2001</div>
<div class="a" style="left:1275.1px;top:367.1px;width:1px;height:16.65px;background:#dcdee3"></div>
<div class="a gt" style="left:1279.10px;top:369.70px;">5/13/2002</div>
<div class="a" style="left:1330px;top:367.1px;width:1px;height:16.65px;background:#dcdee3"></div>
<div class="a gt" style="left:1334.00px;top:369.70px;">S</div>
<div class="a" style="left:1390.1px;top:367.1px;width:1px;height:16.65px;background:#dcdee3"></div>
<div class="a gt" style="left:1394.10px;top:369.70px;">N</div>
<div class="a" style="left:1433.1px;top:367.1px;width:1px;height:16.65px;background:#dcdee3"></div>
<div class="a gt gr" style="right:192.00px;top:369.70px">4.0000</div>
<div class="a" style="left:1502px;top:367.1px;width:1px;height:16.65px;background:#dcdee3"></div>
<div class="a gt gr" style="right:120.00px;top:369.70px">.0000</div>
<div class="a" style="left:1574px;top:367.1px;width:1px;height:16.65px;background:#dcdee3"></div>
<div class="a gt" style="left:1578.00px;top:369.70px;">N</div>
<div class="a" style="left:288px;top:383.75px;width:1350px;height:17.65px;background:#eff2f9;border-top:1px solid #dcdde3"></div>
<div class="cb" style="left:291px;top:386.25px"></div>
<div class="a" style="left:305.5px;top:383.75px;width:1px;height:16.65px;background:#dcdee3"></div>
<div class="a gt" style="left:309.50px;top:386.35px;">C</div>
<div class="a" style="left:368.5px;top:383.75px;width:1px;height:16.65px;background:#dcdee3"></div>
<div class="a gt gr" style="right:1281.80px;top:386.35px">60</div>
<div class="a" style="left:412.2px;top:383.75px;width:1px;height:16.65px;background:#dcdee3"></div>
<div class="a gt" style="left:416.20px;top:386.35px;">DEPTB</div>
<div class="a" style="left:456.5px;top:383.75px;width:1px;height:16.65px;background:#dcdee3"></div>
<div class="a gt" style="left:460.50px;top:386.35px;">WC2</div>
<div class="a" style="left:501.5px;top:383.75px;width:1px;height:16.65px;background:#dcdee3"></div>
<div class="a" style="left:576.4px;top:383.75px;width:1px;height:16.65px;background:#dcdee3"></div>
<div class="a" style="left:625.3px;top:383.75px;width:1px;height:16.65px;background:#dcdee3"></div>
<div class="a gt" style="left:629.30px;top:386.35px;">BIKEAS</div>
<div class="a" style="left:754.2px;top:383.75px;width:1px;height:16.65px;background:#dcdee3"></div>
<div class="a gt" style="left:758.20px;top:386.35px;">Adventure Bike, LW, Black</div>
<div class="a" style="left:894.9px;top:383.75px;width:1px;height:16.65px;background:#dcdee3"></div>
<div class="a gt gr" style="right:745.70px;top:386.35px">5.0000</div>
<div class="a" style="left:948.3px;top:383.75px;width:1px;height:16.65px;background:#dcdee3"></div>
<div class="a" style="left:949.3px;top:384.75px;width:60.10000000000002px;height:15.649999999999999px;background:#00ee00"></div>
<div class="a gt gr" style="right:684.60px;top:386.35px">5.0000</div>
<div class="a" style="left:1009.4px;top:383.75px;width:1px;height:16.65px;background:#dcdee3"></div>
<div class="a gt gr" style="right:635.90px;top:386.35px">.0000</div>
<div class="a" style="left:1058.1px;top:383.75px;width:1px;height:16.65px;background:#dcdee3"></div>
<div class="a gt gr" style="right:568.80px;top:386.35px">2.0000</div>
<div class="a" style="left:1125.2px;top:383.75px;width:1px;height:16.65px;background:#dcdee3"></div>
<div class="a gt" style="left:1129.20px;top:386.35px;">EA</div>
<div class="a" style="left:1161.2px;top:383.75px;width:1px;height:16.65px;background:#dcdee3"></div>
<div class="a gt" style="left:1165.20px;top:386.35px;">12/31/2001</div>
<div class="a" style="left:1218.1px;top:383.75px;width:1px;height:16.65px;background:#dcdee3"></div>
<div class="a gt" style="left:1222.10px;top:386.35px;">1/2/2002</div>
<div class="a" style="left:1275.1px;top:383.75px;width:1px;height:16.65px;background:#dcdee3"></div>
<div class="a gt" style="left:1279.10px;top:386.35px;">5/13/2002</div>
<div class="a" style="left:1330px;top:383.75px;width:1px;height:16.65px;background:#dcdee3"></div>
<div class="a gt" style="left:1334.00px;top:386.35px;">S</div>
<div class="a" style="left:1390.1px;top:383.75px;width:1px;height:16.65px;background:#dcdee3"></div>
<div class="a gt" style="left:1394.10px;top:386.35px;">N</div>
<div class="a" style="left:1433.1px;top:383.75px;width:1px;height:16.65px;background:#dcdee3"></div>
<div class="a gt gr" style="right:192.00px;top:386.35px">5.0000</div>
<div class="a" style="left:1502px;top:383.75px;width:1px;height:16.65px;background:#dcdee3"></div>
<div class="a gt gr" style="right:120.00px;top:386.35px">.0000</div>
<div class="a" style="left:1574px;top:383.75px;width:1px;height:16.65px;background:#dcdee3"></div>
<div class="a gt" style="left:1578.00px;top:386.35px;">N</div>
<div class="a" style="left:288px;top:400.4px;width:1350px;height:17.65px;background:#f6f5fc;border-top:1px solid #dcdde3"></div>
<div class="cb" style="left:291px;top:402.90px"></div>
<div class="a" style="left:305.5px;top:400.4px;width:1px;height:16.65px;background:#dcdee3"></div>
<div class="a gt" style="left:309.50px;top:403.00px;">C</div>
<div class="a" style="left:368.5px;top:400.4px;width:1px;height:16.65px;background:#dcdee3"></div>
<div class="a gt gr" style="right:1281.80px;top:403.00px">70</div>
<div class="a" style="left:412.2px;top:400.4px;width:1px;height:16.65px;background:#dcdee3"></div>
<div class="a gt" style="left:416.20px;top:403.00px;">DEPTB</div>
<div class="a" style="left:456.5px;top:400.4px;width:1px;height:16.65px;background:#dcdee3"></div>
<div class="a gt" style="left:460.50px;top:403.00px;">WC2.A</div>
<div class="a" style="left:501.5px;top:400.4px;width:1px;height:16.65px;background:#dcdee3"></div>
<div class="a" style="left:576.4px;top:400.4px;width:1px;height:16.65px;background:#dcdee3"></div>
<div class="a" style="left:625.3px;top:400.4px;width:1px;height:16.65px;background:#dcdee3"></div>
<div class="a gt" style="left:629.30px;top:403.00px;">BIKEAS</div>
<div class="a" style="left:754.2px;top:400.4px;width:1px;height:16.65px;background:#dcdee3"></div>
<div class="a gt" style="left:758.20px;top:403.00px;">Adventure Bike, LW, Black</div>
<div class="a" style="left:894.9px;top:400.4px;width:1px;height:16.65px;background:#dcdee3"></div>
<div class="a gt gr" style="right:745.70px;top:403.00px">5.0000</div>
<div class="a" style="left:948.3px;top:400.4px;width:1px;height:16.65px;background:#dcdee3"></div>
<div class="a" style="left:949.3px;top:401.4px;width:60.10000000000002px;height:15.649999999999999px;background:#00ee00"></div>
<div class="a gt gr" style="right:684.60px;top:403.00px">5.0000</div>
<div class="a" style="left:1009.4px;top:400.4px;width:1px;height:16.65px;background:#dcdee3"></div>
<div class="a gt gr" style="right:635.90px;top:403.00px">.0000</div>
<div class="a" style="left:1058.1px;top:400.4px;width:1px;height:16.65px;background:#dcdee3"></div>
<div class="a gt gr" style="right:568.80px;top:403.00px">.0000</div>
<div class="a" style="left:1125.2px;top:400.4px;width:1px;height:16.65px;background:#dcdee3"></div>
<div class="a gt" style="left:1129.20px;top:403.00px;">EA</div>
<div class="a" style="left:1161.2px;top:400.4px;width:1px;height:16.65px;background:#dcdee3"></div>
<div class="a gt" style="left:1165.20px;top:403.00px;">1/2/2002</div>
<div class="a" style="left:1218.1px;top:400.4px;width:1px;height:16.65px;background:#dcdee3"></div>
<div class="a gt" style="left:1222.10px;top:403.00px;">1/4/2002</div>
<div class="a" style="left:1275.1px;top:400.4px;width:1px;height:16.65px;background:#dcdee3"></div>
<div class="a gt" style="left:1279.10px;top:403.00px;">5/13/2002</div>
<div class="a" style="left:1330px;top:400.4px;width:1px;height:16.65px;background:#dcdee3"></div>
<div class="a gt" style="left:1334.00px;top:403.00px;">S</div>
<div class="a" style="left:1390.1px;top:400.4px;width:1px;height:16.65px;background:#dcdee3"></div>
<div class="a gt" style="left:1394.10px;top:403.00px;">N</div>
<div class="a" style="left:1433.1px;top:400.4px;width:1px;height:16.65px;background:#dcdee3"></div>
<div class="a gt gr" style="right:192.00px;top:403.00px">5.0000</div>
<div class="a" style="left:1502px;top:400.4px;width:1px;height:16.65px;background:#dcdee3"></div>
<div class="a gt gr" style="right:120.00px;top:403.00px">.0000</div>
<div class="a" style="left:1574px;top:400.4px;width:1px;height:16.65px;background:#dcdee3"></div>
<div class="a gt" style="left:1578.00px;top:403.00px;">N</div>
<div class="a" style="left:288px;top:417.04999999999995px;width:1350px;height:17.65px;background:#eff2f9;border-top:1px solid #dcdde3"></div>
<div class="cb" style="left:291px;top:419.55px"></div>
<div class="a" style="left:305.5px;top:417.04999999999995px;width:1px;height:16.65px;background:#dcdee3"></div>
<div class="a gt" style="left:309.50px;top:419.65px;">C</div>
<div class="a" style="left:368.5px;top:417.04999999999995px;width:1px;height:16.65px;background:#dcdee3"></div>
<div class="a gt gr" style="right:1281.80px;top:419.65px">80</div>
<div class="a" style="left:412.2px;top:417.04999999999995px;width:1px;height:16.65px;background:#dcdee3"></div>
<div class="a gt" style="left:416.20px;top:419.65px;">DEPTC</div>
<div class="a" style="left:456.5px;top:417.04999999999995px;width:1px;height:16.65px;background:#dcdee3"></div>
<div class="a gt" style="left:460.50px;top:419.65px;">WC3</div>
<div class="a" style="left:501.5px;top:417.04999999999995px;width:1px;height:16.65px;background:#dcdee3"></div>
<div class="a" style="left:576.4px;top:417.04999999999995px;width:1px;height:16.65px;background:#dcdee3"></div>
<div class="a gt" style="left:580.40px;top:419.65px;">Y</div>
<div class="a" style="left:625.3px;top:417.04999999999995px;width:1px;height:16.65px;background:#dcdee3"></div>
<div class="a gt" style="left:629.30px;top:419.65px;">BIKEAS</div>
<div class="a" style="left:754.2px;top:417.04999999999995px;width:1px;height:16.65px;background:#dcdee3"></div>
<div class="a gt" style="left:758.20px;top:419.65px;">Adventure Bike, LW, Black</div>
<div class="a" style="left:894.9px;top:417.04999999999995px;width:1px;height:16.65px;background:#dcdee3"></div>
<div class="a gt gr" style="right:745.70px;top:419.65px">5.0000</div>
<div class="a" style="left:948.3px;top:417.04999999999995px;width:1px;height:16.65px;background:#dcdee3"></div>
<div class="a" style="left:949.3px;top:418.04999999999995px;width:60.10000000000002px;height:15.649999999999999px;background:#00ee00"></div>
<div class="a gt gr" style="right:684.60px;top:419.65px">5.0000</div>
<div class="a" style="left:1009.4px;top:417.04999999999995px;width:1px;height:16.65px;background:#dcdee3"></div>
<div class="a gt gr" style="right:635.90px;top:419.65px">.0000</div>
<div class="a" style="left:1058.1px;top:417.04999999999995px;width:1px;height:16.65px;background:#dcdee3"></div>
<div class="a gt gr" style="right:568.80px;top:419.65px">.0000</div>
<div class="a" style="left:1125.2px;top:417.04999999999995px;width:1px;height:16.65px;background:#dcdee3"></div>
<div class="a gt" style="left:1129.20px;top:419.65px;">EA</div>
<div class="a" style="left:1161.2px;top:417.04999999999995px;width:1px;height:16.65px;background:#dcdee3"></div>
<div class="a gt" style="left:1165.20px;top:419.65px;">1/4/2002</div>
<div class="a" style="left:1218.1px;top:417.04999999999995px;width:1px;height:16.65px;background:#dcdee3"></div>
<div class="a gt" style="left:1222.10px;top:419.65px;">1/4/2002</div>
<div class="a" style="left:1275.1px;top:417.04999999999995px;width:1px;height:16.65px;background:#dcdee3"></div>
<div class="a gt" style="left:1279.10px;top:419.65px;">5/13/2002</div>
<div class="a" style="left:1330px;top:417.04999999999995px;width:1px;height:16.65px;background:#dcdee3"></div>
<div class="a gt" style="left:1334.00px;top:419.65px;">S</div>
<div class="a" style="left:1390.1px;top:417.04999999999995px;width:1px;height:16.65px;background:#dcdee3"></div>
<div class="a gt" style="left:1394.10px;top:419.65px;">N</div>
<div class="a" style="left:1433.1px;top:417.04999999999995px;width:1px;height:16.65px;background:#dcdee3"></div>
<div class="a gt gr" style="right:192.00px;top:419.65px">3.0000</div>
<div class="a" style="left:1502px;top:417.04999999999995px;width:1px;height:16.65px;background:#dcdee3"></div>
<div class="a gt gr" style="right:120.00px;top:419.65px">.0000</div>
<div class="a" style="left:1574px;top:417.04999999999995px;width:1px;height:16.65px;background:#dcdee3"></div>
<div class="a gt" style="left:1578.00px;top:419.65px;">N</div>
<div class="a" style="left:288px;top:417.65px;width:1349px;height:15.849999999999998px;border:1px dotted #333"></div>
<div class="a" style="left:270px;top:433.7px;width:1368px;height:17.65px;background:#f8f8fa;border-top:1px solid #dcdde3"></div>
<svg class="a" style="left:277px;top:438.20px" width="5" height="8"><path d="M0 0 L4 4 L0 8 Z" fill="#6e7079"/></svg>
<div class="cb" style="left:290px;top:436.20px"></div>
<div class="a gb" style="left:306px;top:437.50px;">Ord No:</div>
<div class="a gb" style="left:360px;top:437.50px;">22</div>
<div class="a" style="left:270px;top:450.35px;width:1368px;height:17.65px;background:#f8f8fa;border-top:1px solid #dcdde3"></div>
<svg class="a" style="left:277px;top:454.85px" width="5" height="8"><path d="M0 0 L4 4 L0 8 Z" fill="#6e7079"/></svg>
<div class="cb" style="left:290px;top:452.85px"></div>
<div class="a gb" style="left:306px;top:454.15px;">Ord No:</div>
<div class="a gb" style="left:360px;top:454.15px;">23</div>
<div class="a" style="left:270px;top:467.0px;width:1368px;height:17.65px;background:#f8f8fa;border-top:1px solid #dcdde3"></div>
<svg class="a" style="left:277px;top:471.50px" width="5" height="8"><path d="M0 0 L4 4 L0 8 Z" fill="#6e7079"/></svg>
<div class="cb" style="left:290px;top:469.50px"></div>
<div class="a gb" style="left:306px;top:470.80px;">Ord No:</div>
<div class="a gb" style="left:360px;top:470.80px;">24</div>
<div class="a" style="left:270px;top:483.65px;width:1368px;height:17.65px;background:#f8f8fa;border-top:1px solid #dcdde3"></div>
<svg class="a" style="left:277px;top:488.15px" width="5" height="8"><path d="M0 0 L4 4 L0 8 Z" fill="#6e7079"/></svg>
<div class="cb" style="left:290px;top:486.15px"></div>
<div class="a gb" style="left:306px;top:487.45px;">Ord No:</div>
<div class="a gb" style="left:360px;top:487.45px;">25</div>
<div class="a" style="left:270px;top:500.29999999999995px;width:1368px;height:17.65px;background:#f8f8fa;border-top:1px solid #dcdde3"></div>
<svg class="a" style="left:277px;top:504.80px" width="5" height="8"><path d="M0 0 L4 4 L0 8 Z" fill="#6e7079"/></svg>
<div class="cb" style="left:290px;top:502.80px"></div>
<div class="a gb" style="left:306px;top:504.10px;">Ord No:</div>
<div class="a gb" style="left:360px;top:504.10px;">26</div>
<div class="a" style="left:270px;top:516.95px;width:1368px;height:17.65px;background:#f8f8fa;border-top:1px solid #dcdde3"></div>
<svg class="a" style="left:277px;top:521.45px" width="5" height="8"><path d="M0 0 L4 4 L0 8 Z" fill="#6e7079"/></svg>
<div class="cb" style="left:290px;top:519.45px"></div>
<div class="a gb" style="left:306px;top:520.75px;">Ord No:</div>
<div class="a gb" style="left:360px;top:520.75px;">27</div>
<div class="a" style="left:270px;top:533.5999999999999px;width:1368px;height:17.65px;background:#f8f8fa;border-top:1px solid #dcdde3"></div>
<svg class="a" style="left:277px;top:538.10px" width="5" height="8"><path d="M0 0 L4 4 L0 8 Z" fill="#6e7079"/></svg>
<div class="cb" style="left:290px;top:536.10px"></div>
<div class="a gb" style="left:306px;top:537.40px;">Ord No:</div>
<div class="a gb" style="left:360px;top:537.40px;">28</div>
<div class="a" style="left:270px;top:550.25px;width:1368px;height:17.65px;background:#f8f8fa;border-top:1px solid #dcdde3"></div>
<svg class="a" style="left:277px;top:554.75px" width="5" height="8"><path d="M0 0 L4 4 L0 8 Z" fill="#6e7079"/></svg>
<div class="cb" style="left:290px;top:552.75px"></div>
<div class="a gb" style="left:306px;top:554.05px;">Ord No:</div>
<div class="a gb" style="left:360px;top:554.05px;">29</div>
<div class="a" style="left:270px;top:566.9px;width:1368px;height:17.65px;background:#f8f8fa;border-top:1px solid #dcdde3"></div>
<svg class="a" style="left:277px;top:571.40px" width="5" height="8"><path d="M0 0 L4 4 L0 8 Z" fill="#6e7079"/></svg>
<div class="cb" style="left:290px;top:569.40px"></div>
<div class="a gb" style="left:306px;top:570.70px;">Ord No:</div>
<div class="a gb" style="left:360px;top:570.70px;">30</div>
<div class="a" style="left:270px;top:583.55px;width:1368px;height:17.65px;background:#f8f8fa;border-top:1px solid #dcdde3"></div>
<svg class="a" style="left:277px;top:588.05px" width="5" height="8"><path d="M0 0 L4 4 L0 8 Z" fill="#6e7079"/></svg>
<div class="cb" style="left:290px;top:586.05px"></div>
<div class="a gb" style="left:306px;top:587.35px;">Ord No:</div>
<div class="a gb" style="left:360px;top:587.35px;">31</div>
<div class="a" style="left:270px;top:591.5px;width:1368px;height:14.5px;background:#f8f8fa"></div>
<div class="a" style="left:1638px;top:591.5px;width:15px;height:14.5px;background:#ececf0"></div>
<div class="a" style="left:269px;top:606px;width:1385px;height:1px;background:#b6b9c1"></div>
<svg class="a" style="left:275px;top:594px" width="5" height="8"><path d="M5 0 L0 4 L5 8 Z" fill="#7f818a"/></svg>
<div class="a" style="left:285px;top:596px;width:1328px;height:6px;background:#e8e9ee;border:1px solid #b9bcc4;border-radius:3px"></div>
<svg class="a" style="left:1627px;top:594px" width="5" height="8"><path d="M0 0 L5 4 L0 8 Z" fill="#7f818a"/></svg></body></html>
